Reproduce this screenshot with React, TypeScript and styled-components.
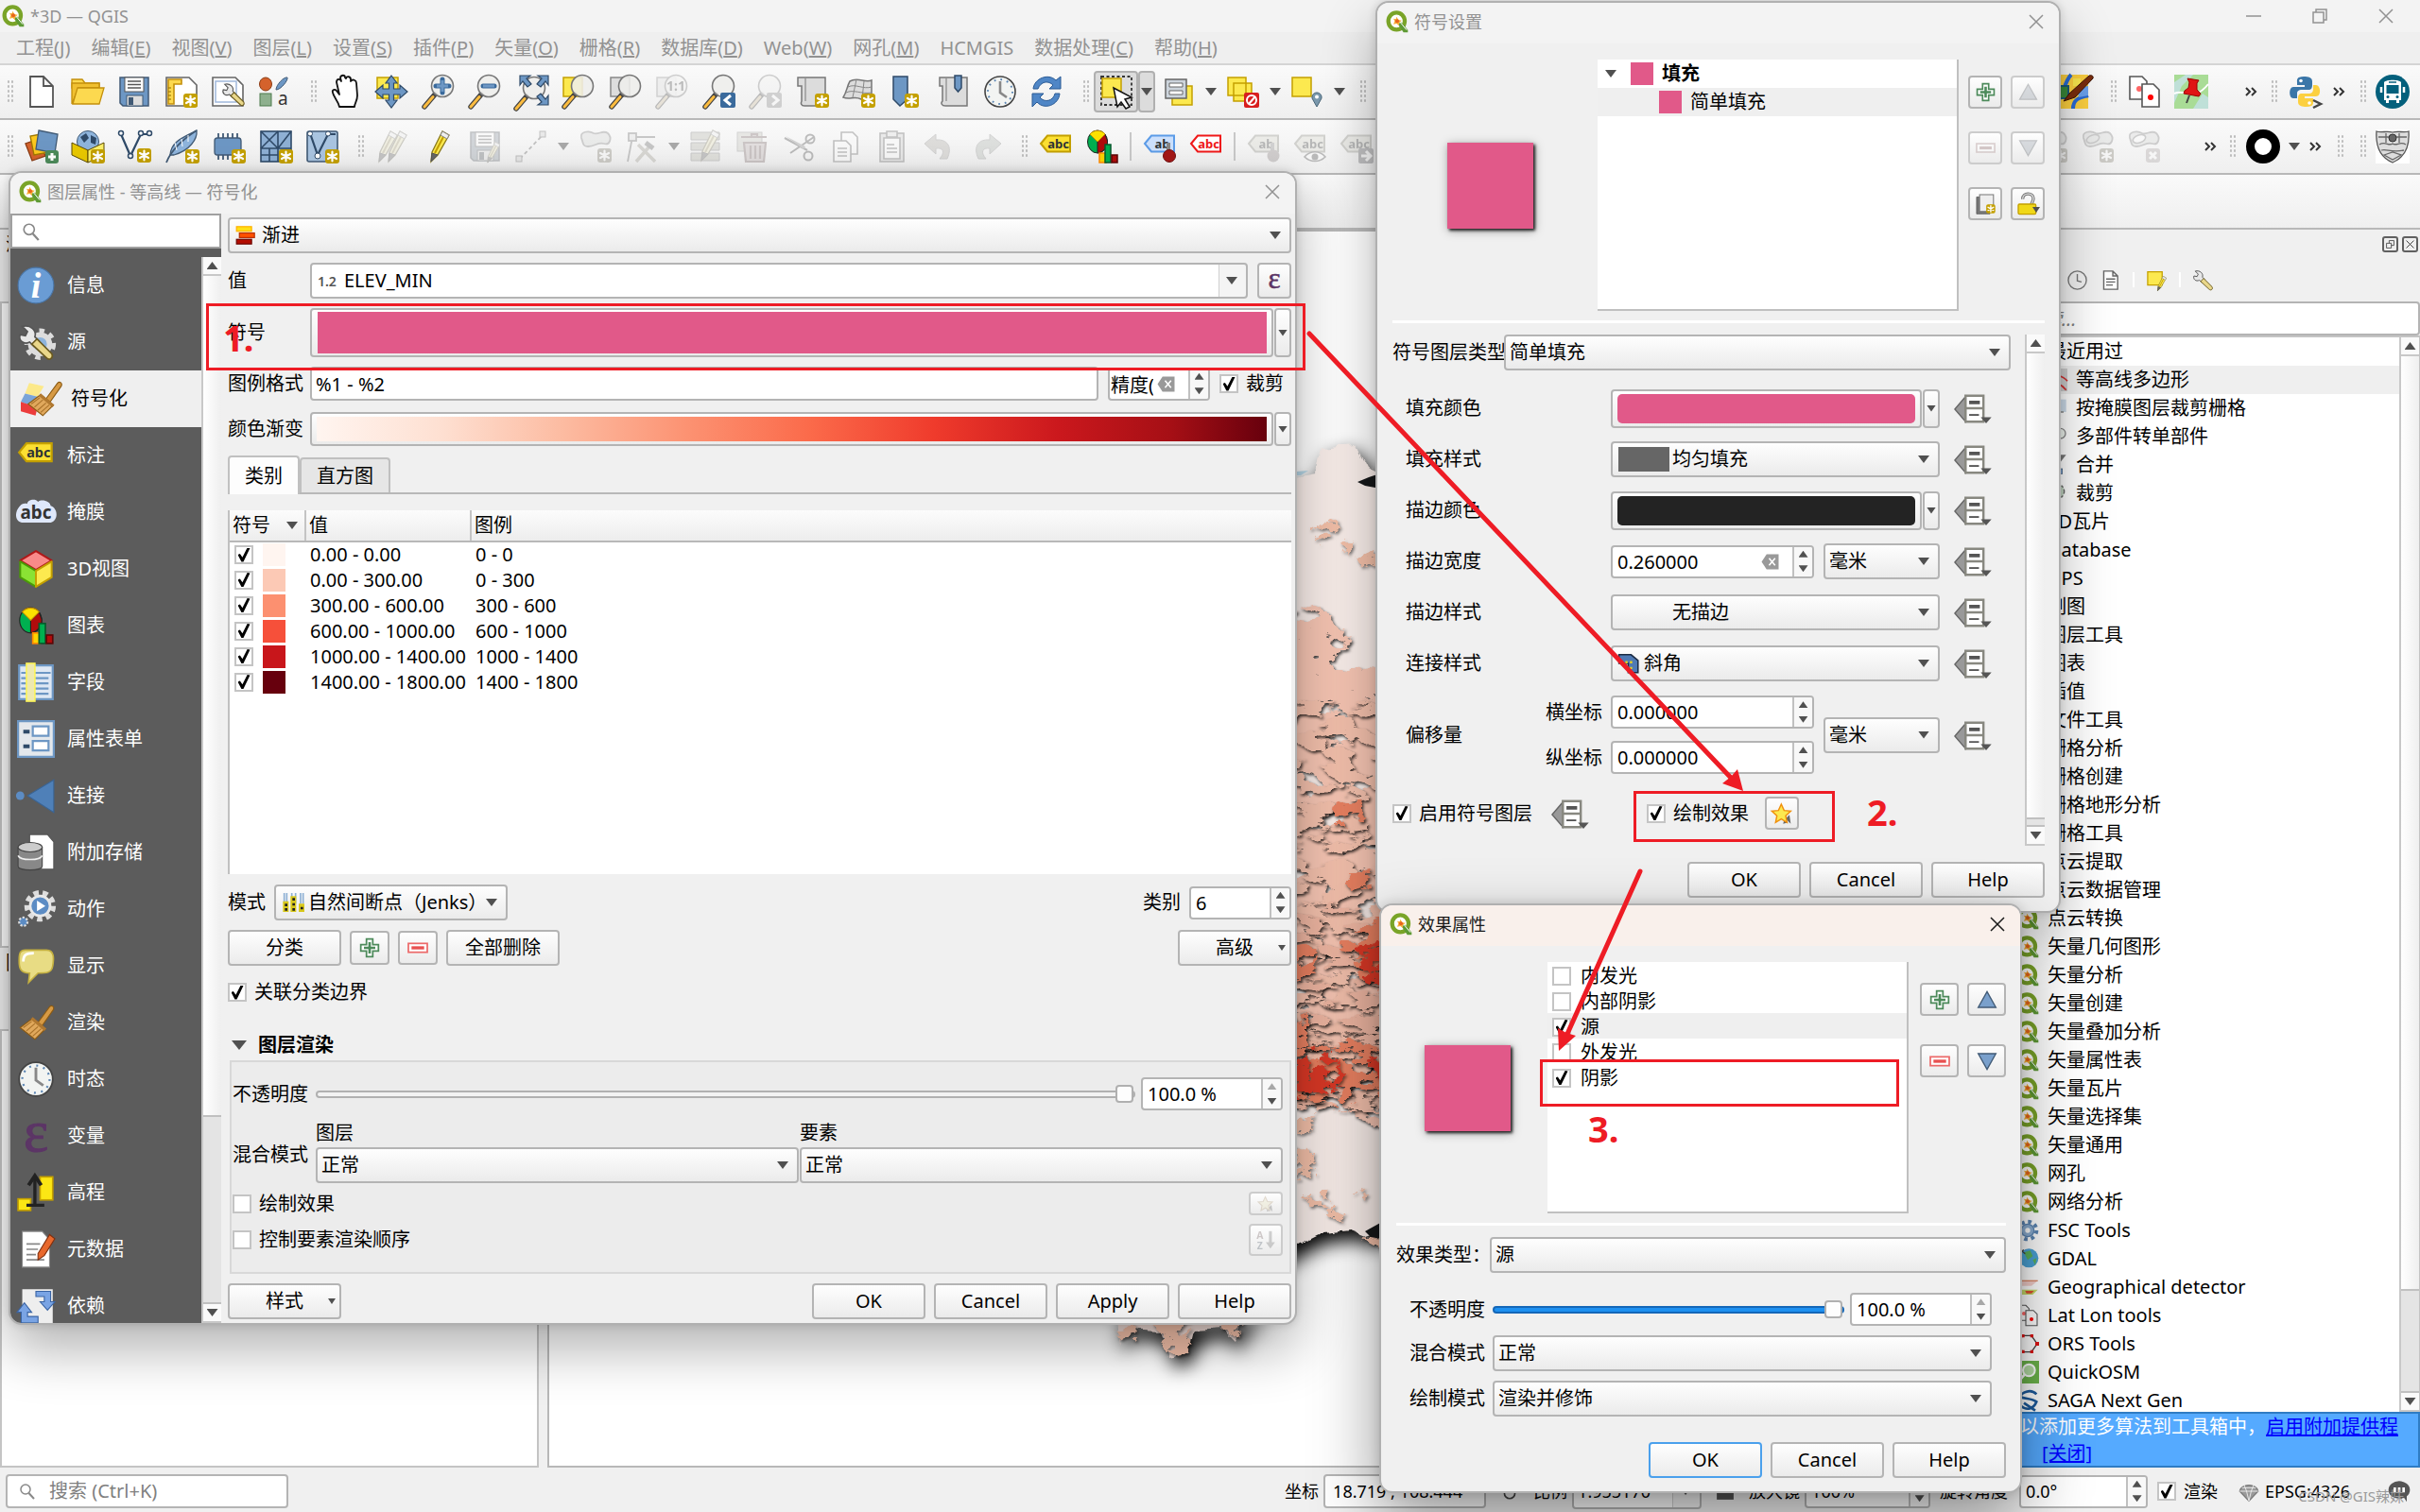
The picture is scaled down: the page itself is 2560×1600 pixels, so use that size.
import React, { ReactNode, useId } from "react";
import styled, { createGlobalStyle, css } from "styled-components";

const PINK = "#e15989";
const RED = "#ee1c25";

const Global = createGlobalStyle`
  * { box-sizing: border-box; }
  html, body { margin: 0; height: 100%; overflow: hidden; }
  body, button, input, select, textarea {
    font-family: "Noto Sans", "Noto Sans CJK SC", sans-serif;
    font-size: 20px;
    line-height: 24px;
    color: #000;
  }
  button { padding: 0; margin: 0; cursor: default; }
  input, select { margin: 0; outline: none; min-width: 0; }
`;

/* ------------------------------------------------------------------ */
/* Icons                                                               */
/* ------------------------------------------------------------------ */

const Svg = styled.svg<{ $dim?: boolean }>`
  display: block;
  flex: none;
  overflow: visible;
  ${(p) => p.$dim && css`opacity: 0.32; filter: grayscale(0.75);`}
`;

const Badge = ({ x = 20, y = 20, c = "#c4a000" }: { x?: number; y?: number; c?: string }) => (
  <g>
    <rect x={x} y={y} width="15" height="15" rx="3" fill={c} />
    <path
      d={`M${x + 7.5} ${y + 2.5}v10M${x + 3} ${y + 5}l9 5M${x + 12} ${y + 5}l-9 5`}
      stroke="#fff" strokeWidth="2.2" strokeLinecap="round"
    />
  </g>
);

const Lens = ({ children, cx = 22, cy = 12 }: { children?: ReactNode; cx?: number; cy?: number }) => (
  <g>
    <path d={`M${cx - 8} ${cy + 9}L${cx - 19} ${cy + 22}`} stroke="#444" strokeWidth="5.5" strokeLinecap="round" />
    <path d={`M${cx - 10} ${cy + 11.5}L${cx - 19} ${cy + 22}`} stroke="#fcbc3f" strokeWidth="3" strokeLinecap="round" />
    <circle cx={cx} cy={cy} r="11.5" fill="#eeeeec" fillOpacity="0.88" stroke="#777" strokeWidth="1.6" />
    {children}
  </g>
);

const Tag = ({ fill, stroke, text = "abc", color = "#2e3436" }: { fill: string; stroke: string; text?: string; color?: string }) => (
  <g>
    <path d="M2 15L9 6.500H33V23.500H9Z" fill={fill} stroke={stroke} strokeWidth="2" />
    <text x="20.500" y="19.500" textAnchor="middle" fontSize="13" fontWeight="700" fill={color}>{text}</text>
  </g>
);

const floppy = (
  <g>
    <path d="M3 3H33V33H6L3 30Z" fill="#6d97c4" stroke="#415a75" strokeWidth="1.500" />
    <rect x="8" y="3" width="20" height="15" fill="#fff" stroke="#555" />
    <path d="M11 7h14M11 10.500h14M11 14h14" stroke="#555" strokeWidth="1.500" />
    <rect x="10" y="22" width="17" height="11" fill="#ddd" stroke="#415a75" />
    <rect x="12" y="24" width="5" height="8" fill="#415a75" />
  </g>
);

const pencil = (
  <g>
    <path d="M11 24L22 2L29 6L17 27L10 34Z" fill="#fce94f" stroke="#8a7a1c" strokeWidth="1.300" />
    <path d="M14 25L25 4" stroke="#c4a000" strokeWidth="2" />
    <path d="M11 25L17 27L10 34Z" fill="#666" stroke="#555" />
    <path d="M22 2L29 6L27 10L20 6Z" fill="#eee" stroke="#888" />
  </g>
);

const blob = (
  <path d="M3 9C1 2 11 1 16 4C21 6 26 0 31 4C36 9 33 17 27 15C20 13 18 18 10 18C4 18 5 14 3 9Z" fill="#d0d6d0" stroke="#777" strokeWidth="1.800" />
);

const pie = (
  <g>
    <ellipse cx="13" cy="13" rx="10.500" ry="12" fill="#00b050" stroke="#222" />
    <path d="M13 13V25C20 24 24 18 23.500 12L21 5Z" fill="#b00c0c" stroke="#222" />
    <path d="M13 13L5 5C9 0 17 0 21 5Z" fill="#fce100" stroke="#c49000" />
    <rect x="15" y="25" width="7" height="10" fill="#fcd400" stroke="#ff8a00" strokeWidth="1.500" />
    <rect x="21" y="16" width="6" height="19" fill="#00b050" stroke="#065a2c" strokeWidth="1.500" />
    <rect x="28" y="27" width="6" height="8" fill="#b00c0c" stroke="#5c0606" strokeWidth="1.500" />
  </g>
);

const clock = (
  <g>
    <circle cx="18" cy="18" r="16" fill="#f2f4f2" stroke="#444" strokeWidth="1.600" />
    <circle cx="18" cy="18" r="13" fill="none" stroke="#5c86b4" strokeWidth="2" strokeDasharray="1.800 5" />
    <path d="M18 7V19L25 24" fill="none" stroke="#888" strokeWidth="2.600" />
  </g>
);

const wrench = (
  <g>
    <path d="M5 3L10 8L8 12L3 11C1 16 6 21 12 18L16 22L21 17L17 13C19 7 13 1 5 3Z" fill="#e8e8e8" stroke="#555" strokeWidth="1.500" />
    <path d="M14 20L19 15L33 29C35 33 31 36 28 33Z" fill="#e9d78a" stroke="#6a5a20" strokeWidth="1.500" />
  </g>
);

const brush = (
  <g>
    <path d="M20 18L31 3C33 1 36 3 34.500 6L24 21Z" fill="#d79a44" stroke="#8a5a14" />
    <path d="M15 14L27 24L17 34L3 23Z" fill="#e0a85c" stroke="#8a5a14" />
    <path d="M6 23L14 17M9 26L17 19M12 29L20 22M15 31L23 24" stroke="#a9722a" />
    <path d="M14 14L27 25" stroke="#b07830" strokeWidth="3" />
  </g>
);

const ICONS: Record<string, ReactNode> = {
  qgis: (
    <g>
      <ellipse cx="17" cy="17" rx="13" ry="13.500" fill="#fff" stroke="#7aa428" strokeWidth="6.500" />
      <path d="M18 20L25 19L35 31V35H28Z" fill="#5e9a34" />
      <path d="M19 20l4-1 10 12" fill="none" stroke="#fff" strokeWidth="1.500" />
      <path d="M17 10L20 15L25 16L21 20L21 24L17 21L12 22L14 17L12 13L16 14Z" fill="#f7b03a" />
      <circle cx="18" cy="17" r="3" fill="#e8641c" />
    </g>
  ),
  newDoc: <path d="M6 2H20L30 12V34H6ZM20 2V12H30" fill="#fff" stroke="#555" strokeWidth="1.800" />,
  open: (
    <g stroke="#c4900c" strokeWidth="1.300">
      <path d="M1 5H12L15 9H30V14H1Z" fill="#fcd94f" />
      <path d="M1 31V9H30V14H8Z" fill="#f0c030" />
      <path d="M2 31L7 14H35L30 31Z" fill="#fcd94f" />
    </g>
  ),
  save: floppy,
  newLayout: (
    <g>
      <path d="M2 3H26L34 11V33H2Z" fill="#fff" stroke="#666" strokeWidth="1.600" />
      <path d="M4 5H18V10H10V31H4Z" fill="#fcd94f" stroke="#c4900c" strokeWidth="1.600" />
      <path d="M4 14h3M4 18h3M4 22h3M4 26h3" stroke="#8a6a00" />
      <Badge />
    </g>
  ),
  layoutMgr: (
    <g>
      <path d="M2 3H26L34 11V33H2Z" fill="#fff" stroke="#666" strokeWidth="1.600" />
      <rect x="5" y="7" width="22" height="22" fill="none" stroke="#a0b8dc" strokeWidth="1.500" />
      <g transform="translate(11 8) scale(.72)">{wrench}</g>
    </g>
  ),
  style: (
    <g>
      <ellipse cx="9" cy="10" rx="6.500" ry="7" fill="#d4622c" stroke="#8a3c14" />
      <path d="M20 16C20 11 28 2 32 3C33 6 25 16 20 16Z" fill="#6d97c4" stroke="#415a75" />
      <rect x="3" y="20" width="12" height="13" fill="#8eb08e" stroke="#4c7a4c" />
      <text x="22" y="32" fontSize="19" fill="#333">a</text>
    </g>
  ),
  hand: (
    <path d="M12 34C11 28 6 24 5 19C4 16 7 15 9 17L12 21L9 8C9 4 13 4 14 7L13 3C14 0 18 0 18 3L19 4C20 1 24 2 24 5L24 7C26 4 30 6 30 9L31 22C31 28 28 30 28 34Z" fill="#fff" stroke="#111" strokeWidth="1.800" strokeLinejoin="round" />
  ),
  pan: (
    <g>
      <rect x="3" y="3" width="22" height="22" fill="#fce94f" stroke="#c4a000" strokeWidth="1.500" />
      <path d="M18 1L24 9H20.500V15H27V11L35 18L27 25V21H20.500V27H24L18 35L12 27H15.500V21H9V25L1 18L9 11V15H15.500V9H12Z" fill="#6d97c4" stroke="#2f4a68" strokeWidth="1.200" />
    </g>
  ),
  zoomIn: <Lens><path d="M22 5V19M15 12H29" stroke="#3a6a9c" strokeWidth="5" strokeLinecap="round" /><path d="M22 6V18M16 12H28" stroke="#6d97c4" strokeWidth="3" /></Lens>,
  zoomOut: <Lens><path d="M16 12H28" stroke="#3a6a9c" strokeWidth="5" strokeLinecap="round" /><path d="M16 12H28" stroke="#6d97c4" strokeWidth="3" /></Lens>,
  zoomFull: (
    <g>
      <Lens cx={20} cy={14} />
      <path d="M5 1H16L12 4L17 10L13 13L8 7L5 11Z M35 1H24L28 4L23 10L27 13L32 7L35 11Z M35 32H24L28 29L23 23L27 20L32 26L35 22Z" fill="#6d97c4" stroke="#2f4a68" strokeWidth="1.200" />
    </g>
  ),
  zoomSel: <g><rect x="2" y="3" width="20" height="20" fill="#fce94f" stroke="#c4a000" strokeWidth="1.500" /><Lens /></g>,
  zoomLayer: <g><rect x="2" y="3" width="20" height="20" fill="#ddd" stroke="#888" strokeWidth="1.500" /><Lens /></g>,
  zoomNative: <g><rect x="2" y="3" width="20" height="20" fill="#ddd" stroke="#888" strokeWidth="1.500" /><Lens><text x="22" y="17" textAnchor="middle" fontSize="14" fontWeight="700" fill="#444">1:1</text></Lens></g>,
  zoomLast: <g><Lens /><rect x="19" y="19" width="16" height="16" rx="2" fill="#3a6a9c" /><path d="M30 22L24 27L30 32" fill="none" stroke="#fff" strokeWidth="3" /></g>,
  zoomNext: <g><Lens /><rect x="19" y="19" width="16" height="16" rx="2" fill="#888" /><path d="M25 22L31 27L25 32" fill="none" stroke="#fff" strokeWidth="3" /></g>,
  mapView: (
    <g>
      <path d="M2 3H31V33H9C5 33 5 30 6 28V12H2Z" fill="#dcdcdc" stroke="#777" strokeWidth="1.500" />
      <path d="M10 4V28" stroke="#aaa" strokeWidth="2" />
      <Badge />
    </g>
  ),
  view3d: (
    <g>
      <path d="M8 7C16 2 24 9 31 6V26H20C13 22 8 27 1 24C5 18 5 12 8 7Z" fill="#dcdcdc" stroke="#777" strokeWidth="1.500" />
      <path d="M6 13C14 9 22 16 31 13M4 19C12 15 20 21 31 19M15 5L11 24M23 7L21 25" fill="none" stroke="#888" />
      <Badge />
    </g>
  ),
  bookmarkNew: <g><path d="M4 2H19V26L11 33L4 26Z" fill="#6d97c4" stroke="#2f4a68" strokeWidth="1.500" /><Badge x={16} /></g>,
  bookmarks: (
    <g>
      <path d="M4 3H33V33H10C6 33 5 30 7 28V12H4Z" fill="#dcdcdc" stroke="#777" strokeWidth="1.500" />
      <path d="M11 4V28" stroke="#aaa" strokeWidth="2" />
      <path d="M20 1H27V14L23.500 18L20 14Z" fill="#6d97c4" stroke="#2f4a68" strokeWidth="1.500" />
    </g>
  ),
  clock,
  refresh: (
    <g fill="#4f86c6" stroke="#2a5a94">
      <path d="M4 15C5 4 20 -2 28 6L33 2V15H21L25 11C20 6 12 7 9 15Z" />
      <path d="M32 20C31 32 16 38 8 29L3 34V20H15L11 24C16 30 25 28 27 20Z" />
    </g>
  ),
  select: (
    <g>
      <rect x="2" y="2" width="32" height="30" fill="none" stroke="#333" strokeWidth="1.800" strokeDasharray="3 2.500" />
      <rect x="3" y="4" width="20" height="20" fill="#fce94f" stroke="#c4a000" strokeWidth="1.500" />
      <path d="M15 14L34 24L27 26L32 34L28 36L23 29L19 34Z" fill="#fff" stroke="#111" strokeWidth="1.500" />
    </g>
  ),
  selectForm: (
    <g>
      <rect x="11" y="12" width="21" height="20" fill="#fce94f" stroke="#c4a000" strokeWidth="1.500" />
      <rect x="4" y="5" width="22" height="20" fill="#ccd4dc" stroke="#666" strokeWidth="1.500" />
      <path d="M8 9h14v4H8zM8 17h14v4H8z" fill="#fff" stroke="#666" />
    </g>
  ),
  deselect: (
    <g>
      <path d="M2 3H21V22H2Z M8 9H27V28H8Z" fill="#fce94f" stroke="#c4a000" strokeWidth="1.500" />
      <rect x="19" y="19" width="16" height="16" rx="2" fill="#d81e1e" />
      <circle cx="27" cy="27" r="5" fill="none" stroke="#fff" strokeWidth="2" /><path d="M24 31L31 23" stroke="#fff" strokeWidth="2" />
    </g>
  ),
  selectLoc: (
    <g>
      <rect x="2" y="3" width="20" height="20" fill="#fce94f" stroke="#c4a000" strokeWidth="1.500" />
      <path d="M28 34L23 25C22 17 34 17 33 25Z" fill="#7a98ac" stroke="#4a6678" /><circle cx="28" cy="23.500" r="2" fill="#fff" />
    </g>
  ),
  josm: (
    <g>
      <rect x="0" y="0" width="34" height="36" fill="#fccf3f" />
      <path d="M0 30C8 24 8 8 16 0M18 36C18 24 28 24 34 22" stroke="#2a6ad4" strokeWidth="4" fill="none" />
      <path d="M22 14L34 12V22L24 24Z" fill="#6aa0ec" />
      <rect x="4" y="12" width="9" height="13" fill="#3a8a3a" stroke="#1a5a7a" strokeWidth="2" /><rect x="18" y="4" width="8" height="8" fill="#fce94f" />
      <path d="M14 20L35 1C37 0 40 1 39 4L20 24L8 28Z" fill="#7a2c0c" stroke="#3c1404" />
    </g>
  ),
  latlon: (
    <g stroke="#555" strokeWidth="1.600">
      <path d="M2 2H15L20 7V26H2Z" fill="#fff" /><circle cx="12" cy="15" r="3" fill="#f66" stroke="none" />
      <path d="M15 10H27L33 16V34H15Z" fill="#fff" /><circle cx="24" cy="24" r="3" fill="#f00" stroke="none" />
    </g>
  ),
  pinMap: (
    <g>
      <rect width="36" height="36" fill="#a9dc96" /><path d="M0 8L12 0H20L8 12L0 30ZM20 36L30 20L36 24V36Z" fill="#bfe0d8" /><path d="M0 20C12 14 20 30 36 10" stroke="#fff" strokeWidth="2" fill="none" />
      <path d="M14 4L26 6L24 9L24 16L28 20L26 23L10 20L11 17L15 14L16 8Z" fill="#e01414" stroke="#900" /><path d="M16 22L13 30" stroke="#444" strokeWidth="2" />
    </g>
  ),
  python: (
    <g>
      <path d="M17 2C9 2 10 6 10 8V11H18V13H6C1 13 1 25 6 25H10V20C10 17 12 16 15 16H22C25 16 26 14 26 11V7C26 3 22 2 17 2Z" fill="#3a76a8" />
      <path d="M20 34C28 34 27 30 27 28V25H18V23H30C36 23 35 11 30 11H27V15C27 19 25 20 22 20H15C12 20 11 22 11 25V29C11 33 15 34 20 34Z" fill="#fcd040" />
      <circle cx="14" cy="6.500" r="1.800" fill="#fff" /><circle cx="23" cy="30" r="1.800" fill="#fff" />
      <path d="M27 27L35 31L27 35" fill="none" stroke="#444" strokeWidth="2.500" />
    </g>
  ),
  bus: (
    <g>
      <circle cx="18" cy="18" r="18" fill="#04607c" />
      <path d="M9 8C11 5 25 5 27 8V27H25V30H22V27H14V30H11V27H9Z" fill="#fff" />
      <path d="M11.500 11H24.500V20H11.500Z" fill="#04607c" /><path d="M14 8h8" stroke="#04607c" strokeWidth="1.500" />
      <circle cx="13" cy="23.500" r="1.500" fill="#04607c" /><circle cx="23" cy="23.500" r="1.500" fill="#04607c" /><path d="M6 13v6M30 13v6" stroke="#fff" strokeWidth="2.500" />
    </g>
  ),
  addLayer: (
    <g strokeWidth="1.300">
      <path d="M1 15L8 33L22 28L15 10Z" fill="#d4622c" stroke="#8a3c14" />
      <path d="M6 7L10 27L26 24L22 4Z" fill="#fcc81e" stroke="#a07800" />
      <path d="M15 1L35 5L32 25L12 21Z" fill="#6d97c4" stroke="#415a75" />
      <rect x="22" y="22" width="14" height="14" rx="3" fill="#4c8a5a" /><path d="M29 25V33M25 29H33" stroke="#fff" strokeWidth="3" />
    </g>
  ),
  dataSrc: (
    <g>
      <circle cx="18" cy="13" r="11.500" fill="#8eb4dc" stroke="#415a75" /><path d="M10 8L16 4L19 9L14 14ZM21 6L27 9L26 16L21 14Z" fill="#2f4a68" />
      <path d="M1 14L18 22V35L1 27Z" fill="#e8c800" stroke="#5c4a00" /><path d="M35 14L18 22V35L35 27Z" fill="#fcf06a" stroke="#5c4a00" />
      <Badge x={21} y={21} />
    </g>
  ),
  newShp: (
    <g stroke="#2f4a68" strokeWidth="2.200">
      <path d="M3 5L13 28L24 5H33" fill="none" /><circle cx="3" cy="4" r="2.500" fill="#fff" strokeWidth="1.500" /><circle cx="24" cy="4" r="2.500" fill="#fff" strokeWidth="1.500" /><circle cx="33" cy="4" r="2.500" fill="#fff" strokeWidth="1.500" /><circle cx="13" cy="28" r="2.500" fill="#fff" strokeWidth="1.500" />
      <g stroke="none"><Badge /></g>
    </g>
  ),
  feather: (
    <g>
      <path d="M5 27C6 12 20 8 33 1C34 10 26 22 9 27Z" fill="#8eb4dc" stroke="#415a75" strokeWidth="1.300" /><path d="M1 35C6 22 16 12 33 1" fill="none" stroke="#415a75" strokeWidth="1.800" /><path d="M12 22L10 14M18 18L17 10M24 13L24 6" stroke="#fff" />
      <Badge x={21} y={21} />
    </g>
  ),
  chip: (
    <g>
      <path d="M7 4v6M12 4v6M17 4v6M22 4v6M27 4v6M7 26v6M12 26v6M17 26v6" stroke="#415a75" strokeWidth="1.800" />
      <rect x="3" y="9" width="28" height="18" rx="3" fill="#6d97c4" stroke="#415a75" strokeWidth="1.300" /><Badge x={21} y={21} />
    </g>
  ),
  meshNew: (
    <g>
      <rect x="2" y="2" width="32" height="32" fill="#8eb0d4" stroke="#2f4a68" strokeWidth="1.600" /><path d="M2 20H34M20 2V34M2 2L20 20M20 2L2 20M34 2L20 20M2 27H20M11 20V34" stroke="#2f4a68" strokeWidth="1.600" /><Badge x={21} y={21} />
    </g>
  ),
  gpkg: (
    <g>
      <rect x="2" y="2" width="32" height="32" rx="2" fill="#a9c4e0" stroke="#415a75" strokeWidth="1.600" /><path d="M5 4L13 27L24 5H32" fill="none" stroke="#2f4a68" strokeWidth="2.200" /><circle cx="5" cy="4.500" r="2.500" fill="#fff" stroke="#2f4a68" /><circle cx="24" cy="4.500" r="2.500" fill="#fff" stroke="#2f4a68" /><circle cx="13" cy="28" r="3" fill="#fff" stroke="#2f4a68" /><Badge x={21} y={21} />
    </g>
  ),
  pencils: <g><g transform="translate(-6 0)">{pencil}</g><g transform="translate(4 0)">{pencil}</g></g>,
  pencil,
  saveEdit: <g>{floppy}<g transform="translate(14 12) scale(.68)">{pencil}</g></g>,
  digitize: <g stroke="#555"><path d="M6 31L30 6" strokeWidth="1.800" strokeDasharray="4 3" /><rect x="2" y="28" width="6" height="6" fill="#ccc" /><rect x="27" y="2" width="6" height="6" fill="#ccc" /></g>,
  blobNew: <g>{blob}<Badge c="#8a7a40" /></g>,
  blobRing: <g>{blob}<ellipse cx="13" cy="10" rx="7" ry="4" fill="none" stroke="#777" strokeWidth="1.600" transform="rotate(-20 13 10)" /><Badge c="#8a7a40" /></g>,
  blobDel: <g>{blob}<ellipse cx="13" cy="10" rx="7" ry="4" fill="#fff" stroke="#777" strokeWidth="1.600" transform="rotate(-20 13 10)" /><rect x="20" y="20" width="15" height="15" rx="3" fill="#b89a9a" /><path d="M24 24l7 7M31 24l-7 7" stroke="#fff" strokeWidth="3" /></g>,
  vertex: <g stroke="#666" strokeWidth="1.800" fill="none"><path d="M8 8H32M8 8L3 34" /><rect x="4" y="4" width="8" height="8" fill="#ddd" /><path d="M12 34L26 18M14 16L32 34" strokeWidth="3.500" stroke="#a89a70" /><path d="M22 14L30 20" strokeWidth="5" /></g>,
  tableEdit: <g><path d="M2 3H32V11H2ZM2 14H32V22H2ZM2 25H32V33H2Z" fill="#b8b88a" stroke="#777" /><g transform="translate(3 -1)">{pencil}</g></g>,
  trash: <g><rect x="2" y="3" width="26" height="20" fill="#c8c8a8" stroke="#888" /><path d="M6 8H33M9 14H32L30 34H11ZM16 17V31M21 17V31M26 17V31M17 8V5H23V8" fill="#d8a8a8" stroke="#a05a5a" strokeWidth="2.200" /></g>,
  scissors: <g fill="none" stroke="#444" strokeWidth="2"><path d="M2 9L26 22M8 25L33 8" /><path d="M3 7L24 18L22 21Z" fill="#888" stroke="none" /><circle cx="29" cy="10" r="4.500" /><circle cx="27" cy="28" r="4.500" /></g>,
  copy: <g stroke="#555" strokeWidth="1.600" fill="#fff"><path d="M13 3H25L30 8V26H13Z" /><path d="M5 12H18L23 17V34H5Z" /><path d="M9 20h10M9 24h10M9 28h10" /></g>,
  paste: <g stroke="#555" strokeWidth="1.600" fill="#fff"><rect x="5" y="4" width="25" height="30" fill="#ccc" /><path d="M9 9H26V31H9Z" /><path d="M12 2h11v6H12z" fill="#ddd" /><path d="M12 16h8M12 20h11M12 24h11" /></g>,
  undo: <path d="M2 15L14 5V11C26 10 32 18 26 31H18C24 24 22 19 14 20V26Z" fill="#b8a890" stroke="#888" />,
  redo: <path d="M34 15L22 5V11C10 10 4 18 10 31H18C12 24 14 19 22 20V26Z" fill="#a0b8a0" stroke="#888" />,
  tagYellow: <Tag fill="#fce032" stroke="#c4a000" />,
  tagBlue: <g><Tag fill="#cce0fc" stroke="#5c9ce8" text="ab" /><path d="M27 14V24" stroke="#888" strokeWidth="4" /><circle cx="28" cy="28" r="6.500" fill="#a41818" stroke="#701010" /></g>,
  tagRed: <Tag fill="#fff" stroke="#f01818" color="#f01818" />,
  tagPin: <g><Tag fill="#d8d8a8" stroke="#888860" text="ab" /><path d="M27 14V24" stroke="#888" strokeWidth="4" /><circle cx="28" cy="28" r="6.500" fill="#a07878" /></g>,
  tagEye: <g><Tag fill="#d8d8a8" stroke="#888860" /><path d="M12 29C18 22 28 22 34 29C28 35 18 35 12 29Z" fill="#fff" stroke="#444" strokeWidth="1.600" /><circle cx="23" cy="29" r="3.500" fill="#444" /></g>,
  tagMove: <g><Tag fill="#d8d8a8" stroke="#888860" /><rect x="20" y="20" width="16" height="16" rx="2" fill="#556" /><path d="M23 28H32M28 23L33 28L28 33" fill="none" stroke="#fff" strokeWidth="3" /></g>,
  pie,
  ring: <circle cx="18" cy="18" r="13.500" fill="#fff" stroke="#000" strokeWidth="9" />,
  crest: (
    <g>
      <rect width="36" height="36" fill="#fff" />
      <path d="M1 2C6 4 12 1 18 3C24 1 30 4 35 2C36 16 32 29 18 35C4 29 0 16 1 2Z" fill="#ddd" stroke="#555" strokeWidth="1.300" />
      <path d="M3 8H33M4 16C10 12 14 18 18 15C22 18 26 12 32 16M6 22C12 20 16 25 30 22M11 4V14M25 4V14M9 27L18 24L27 27L18 32Z" fill="none" stroke="#666" strokeWidth="1.300" /><circle cx="18" cy="9" r="4" fill="#666" stroke="#333" />
    </g>
  ),
  sClock: <g fill="none" stroke="#777" strokeWidth="2.200"><circle cx="18" cy="18" r="15" /><path d="M18 8V19L25 21" /></g>,
  sDoc: <path d="M7 3H22L30 11V33H7ZM22 3V11H30M11 16H26M11 21H26M11 26H22" fill="#fff" stroke="#666" strokeWidth="2.200" />,
  note: <g><path d="M3 4H27V26H3Z" fill="#fce94f" stroke="#c4a000" strokeWidth="2" /><g transform="translate(12 10) scale(.75)">{pencil}</g></g>,
  wrench,
  plus: <g><path d="M13 4H23V13H32V23H23V32H13V23H4V13H13Z" fill="#fff" stroke="#4c8a5a" strokeWidth="2.600" /><path d="M18 9V27M9 18H27" stroke="#4c8a5a" strokeWidth="4" /></g>,
  minus: <g><rect x="3" y="11" width="30" height="14" fill="#fff" stroke="#ec6a6a" strokeWidth="2.600" /><rect x="8" y="15.500" width="20" height="5" fill="#e85050" /></g>,
  up: <path d="M18 5L32 30H4Z" fill="#7aa0cc" stroke="#415a75" strokeWidth="2" />,
  down: <path d="M18 31L32 6H4Z" fill="#7aa0cc" stroke="#415a75" strokeWidth="2" />,
  dup: <g><path d="M3 7H25V35H3Z" fill="#777" stroke="#444" /><path d="M8 3H31V31H8Z" fill="#eee" stroke="#777" strokeWidth="1.600" /><Badge x={19} y={19} /></g>,
  lock: <g><path d="M10 10C10 -1 27 -1 27 9C27 14 24 15 24 19" fill="none" stroke="#777" strokeWidth="5" /><path d="M10 10C10 -1 27 -1 27 9C27 14 24 15 24 19" fill="none" stroke="#ddd" strokeWidth="2" /><rect x="3" y="18" width="28" height="16" rx="2" fill="#f0d818" stroke="#c4a000" strokeWidth="2" /></g>,
  star: <g><path d="M24 26L30 20L32 34L26 28ZM20 34L22 26L28 32Z" fill="#666" /><path d="M17 3L21.500 13L32 14L24 21.500L26 32L17 26.500L8 32L10 21.500L2 14L12.500 13Z" fill="#fce94f" stroke="#f0900c" strokeWidth="2.200" /></g>,
  sortAz: <g><text x="2" y="16" fontSize="17" fontWeight="700" fill="#a05a5a">A</text><text x="3" y="34" fontSize="17" fontWeight="700" fill="#3a6a9c">Z</text><path d="M26 3V24" stroke="#777" strokeWidth="5" /><path d="M18 22H34L26 33Z" fill="#777" /></g>,
  grad: <g strokeWidth="2"><rect x="2" y="3" width="26" height="8" fill="#ffe014" stroke="#ffb000" /><rect x="7" y="14" width="26" height="8" fill="#ff5000" stroke="#b83000" /><rect x="2" y="25" width="26" height="8" fill="#b40c00" stroke="#6c0600" /></g>,
  jenks: <g><path d="M4 3V20M8 3V20M16 3V20M22 3V20M30 3V20M34 3V20" stroke="#8eb0d4" strokeWidth="2.500" /><path d="M2 16H11V33H2ZM14 8H23V33H14ZM27 20H36V33H27Z" fill="#d8c81c" /><path d="M5 20h4v4H5zM5 27h4v4H5zM17 11h4v4h-4zM17 19h4v4h-4zM17 27h4v4h-4zM30 25h4v4h-4z" fill="#222" /></g>,
  bevel: <g><path d="M1 3H22L34 13V34H17V18H1Z" fill="#4f7ab4" stroke="#1c2c44" strokeWidth="2.500" /><path d="M12 14h4v4h-4zM20 14h4v4h-4zM20 24h4v4h-4z" fill="#e8d020" /></g>,
  dd: (
    <g>
      <path d="M1 19L13 5V33Z" fill="#999" stroke="#666" strokeWidth="1.500" />
      <path d="M13 4H33V33H13ZM13 18H33" fill="#fff" stroke="#888880" strokeWidth="2.600" />
      <path d="M17 11.500H29" stroke="#555" strokeWidth="4" /><path d="M17 25.500H28" stroke="#555" strokeWidth="2" />
      <path d="M30 28H42L36 35Z" fill="#555" />
    </g>
  ),
  magnify: <g fill="none" stroke="#888" strokeWidth="3"><circle cx="14" cy="14" r="10" /><path d="M21 22L32 34" strokeWidth="4" /></g>,
  clearX: <g><path d="M1 18L11 3H35V33H11Z" fill="#999" /><path d="M16 11L28 25M28 11L16 25" stroke="#fff" strokeWidth="3" /></g>,
  gear: <g><circle cx="18" cy="18" r="10" fill="#8eb0d4" stroke="#5c86b4" strokeWidth="2" /><circle cx="18" cy="18" r="14" fill="none" stroke="#5c86b4" strokeWidth="6" strokeDasharray="5.500 5.500" /><circle cx="18" cy="18" r="4" fill="#fff" /></g>,
  gdal: <g><circle cx="20" cy="17" r="15" fill="#4ca4d8" /><path d="M12 8L22 5L26 14L18 20ZM26 20L32 17L30 28Z" fill="#5cb45c" /><path d="M4 2L14 10M2 10L12 4" stroke="#444" strokeWidth="2" /><text x="2" y="34" fontSize="15" fontWeight="700">DAL</text></g>,
  geodet: <g><path d="M2 8H34L24 16H2Z" fill="#f4d0cc" /><path d="M2 8H34" stroke="#d86" strokeWidth="2" /><path d="M2 22H34L26 30H6Z" fill="#c8dc6a" /><path d="M14 24H28L24 28H16Z" fill="#e05030" /></g>,
  ors: <g fill="none" stroke="#444" strokeWidth="2"><path d="M10 5H24L33 18L24 31H10L2 18Z" /><path d="M8 3h5v5H8zM22 3h5v5h-5zM8 28h5v5H8zM22 28h5v5h-5zM30 15h6v6h-6z" fill="#e01414" stroke="none" /></g>,
  osm: <g><rect width="36" height="36" fill="#6cb44c" /><circle cx="20" cy="15" r="9.500" fill="#b4dca4" stroke="#fff" strokeWidth="3" /><path d="M13 22L4 32" stroke="#fff" strokeWidth="4" /></g>,
  saga: <g fill="none" stroke="#1c5a9c" strokeWidth="4"><path d="M32 8C22 -2 8 6 6 12C14 16 24 14 32 20C28 30 18 36 6 26" /><path d="M12 22L30 34" /></g>,
  contour: <g><rect width="36" height="36" fill="#ccc" /><path d="M0 20C16 20 28 26 34 34M0 10C16 8 30 12 36 20" stroke="#d03030" strokeWidth="2.500" fill="none" /></g>,
  maskClip: <g><rect x="14" y="4" width="20" height="20" fill="#cddcea" /><path d="M2 24H30M24 4V32" stroke="#888" strokeWidth="2" /></g>,
  multi: <g fill="#eef4ee" stroke="#888" strokeWidth="2"><ellipse cx="12" cy="24" rx="9" ry="8" /><ellipse cx="25" cy="13" rx="8" ry="8" /></g>,
  merge: <g><path d="M2 2H34L20 20H16Z" fill="#777" /><rect x="14" y="24" width="14" height="8" fill="#7aa0cc" stroke="#415a75" /></g>,
  clip: <ellipse cx="16" cy="15" rx="15" ry="13" fill="#c0d4c0" stroke="#666" strokeWidth="2" strokeDasharray="4 3" />,
  mouse: <g fill="none" stroke="#444" strokeWidth="3"><circle cx="18" cy="22" r="10" /><path d="M18 2V12M10 14L4 8M26 14L32 8" /></g>,
  padlock: <g><path d="M8 16V10C8 0 28 0 28 10V16" fill="none" stroke="#555" strokeWidth="4" /><rect x="2" y="16" width="32" height="18" fill="#555" /></g>,
  globe: <g stroke="#777" strokeWidth="2"><path d="M2 18C4 4 32 4 34 18L18 35Z" fill="#999" /><path d="M2 18H34M10 8L14 18L18 35L22 18L26 8M6 12H30" fill="none" stroke="#eee" strokeWidth="1.500" /></g>,
  chat: <g><ellipse cx="18" cy="16" rx="17" ry="14" fill="#555" /><path d="M24 26L30 35L30 24Z" fill="#555" /><path d="M9 12h4v8H9zM16 12h4v8h-4zM23 12h4v8h-4z" fill="#fff" /></g>,
  epsilon: <text x="18" y="32" textAnchor="middle" fontSize="56" fill="#5c3566" stroke="#5c3566" fontFamily="Liberation Serif, serif">ε</text>,
  // sidebar pictures
  info: <g><circle cx="18" cy="18" r="17" fill="#6a9cd4" stroke="#4a76a8" /><text x="18" y="30" textAnchor="middle" fontSize="34" fontStyle="italic" fontWeight="700" fill="#fff" fontFamily="Liberation Serif, serif">i</text></g>,
  source: <g><circle cx="22" cy="20" r="9" fill="#8eb4dc" stroke="#ddd" strokeWidth="5" /><circle cx="22" cy="20" r="13" fill="none" stroke="#ddd" strokeWidth="4" strokeDasharray="5 5" />{wrench}</g>,
  symbology: <g><path d="M8 3L22 6L16 16L4 13Z" fill="#fce98a" /><path d="M4 13L16 16L11 25L0 21Z" fill="#7aa4d8" /><path d="M0 21L16 26L14 34L0 30Z" fill="#ec3c3c" /><g transform="translate(4 0)">{brush}</g></g>,
  mask: <g><path d="M3 12C-3 18 -2 28 6 28H32C40 26 39 14 32 12C32 8 24 5 20 8C17 4 9 7 10 10C7 9 4 10 3 12Z" fill="#dfe8fb" /><text x="18" y="24" textAnchor="middle" fontSize="17" fontWeight="700" fill="#333">abc</text></g>,
  cube: <g strokeWidth="1.800" strokeLinejoin="round"><path d="M18 1L33 10L18 19L3 10Z" fill="#f88a8a" stroke="#b01818" /><path d="M3 11L18 20V35L3 26Z" fill="#8ae234" stroke="#4a9a06" /><path d="M33 11L18 20V35L33 26Z" fill="#fce94f" stroke="#c4a000" /></g>,
  fields: <g><path d="M2 2H34V34H2Z" fill="#dfe8f4" stroke="#6d97c4" strokeWidth="2" /><path d="M4 9H32M4 14H30M4 19H30M4 24H30M4 29H30" stroke="#6d97c4" strokeWidth="2" /><rect x="9" y="0" width="8" height="36" fill="#ede8b0" stroke="#fcf45a" strokeWidth="1.500" /></g>,
  form: <g><path d="M1 1H35V35H1Z" fill="#e4e8ec" stroke="#6d97c4" strokeWidth="2" /><path d="M6 11h6M6 25h6" stroke="#2f4a68" strokeWidth="3.500" /><path d="M15 6H30V15H15ZM15 20H30V29H15Z" fill="#fff" stroke="#6d97c4" strokeWidth="2" /></g>,
  join: <g><circle cx="3" cy="18" r="4" fill="#5c8cc4" /><path d="M10 18L35 3V34Z" fill="#4f80b8" stroke="#3a6494" /></g>,
  storage: <g><path d="M12 1H29L35 8V34H12Z" fill="#fff" stroke="#555" /><path d="M1 13V31C1 36 24 36 24 31V13" fill="#888" stroke="#444" /><ellipse cx="12.500" cy="13" rx="11.500" ry="4.500" fill="#ccc" stroke="#444" /><path d="M1 21C3 26 22 26 24 21" fill="none" stroke="#eee" strokeWidth="1.500" /></g>,
  action: <g><circle cx="22" cy="15" r="12.500" fill="none" stroke="#ddd" strokeWidth="5" strokeDasharray="5 3.700" /><circle cx="22" cy="15" r="9.500" fill="#5c8cc4" stroke="#e8e8e8" strokeWidth="2.500" /><path d="M19 10L27 15L19 20Z" fill="#fff" /><circle cx="6" cy="30" r="4" fill="#5c8cc4" stroke="#ddd" strokeWidth="2" strokeDasharray="2 1.500" /></g>,
  bubble: <g><path d="M8 3H28C36 3 35 12 34 18C33 25 28 25 20 25L11 34L12 25C3 25 2 20 2 13C2 6 3 3 8 3Z" fill="#e8dc84" stroke="#c4b040" strokeWidth="1.500" /><path d="M6 14C6 8 8 6 16 6" fill="none" stroke="#fff" strokeWidth="2.500" /></g>,
  brush,
  elev: <g><rect x="22" y="3" width="12" height="22" fill="#fce614" stroke="#c4a000" strokeWidth="1.500" /><rect x="1" y="24" width="12" height="11" fill="#fce614" stroke="#c4a000" strokeWidth="1.500" /><path d="M17 3V29M9 30H26" stroke="#222" strokeWidth="3" /><path d="M11 11L17 2L23 11" fill="none" stroke="#222" strokeWidth="3.500" /></g>,
  meta: <g><path d="M5 1H24L31 9V35H5Z" fill="#fff" stroke="#888" /><path d="M9 13H22M9 18H20M9 23H18M9 28H26" stroke="#888" strokeWidth="1.500" /><path d="M20 22L31 4L36 8L26 24L20 28Z" fill="#e8682c" stroke="#803010" /></g>,
  deps: <g><path d="M5 2H34V35H5Z" fill="#eee" /><path d="M18 4H32V14H36L29 22L22 14H26V9H18Z" fill="#7aa4e4" stroke="#3a64a4" /><path d="M20 34H4V24H0L7 15L14 24H10V28H20Z" fill="#7aa4e4" stroke="#3a64a4" /></g>,
};

const Icon = ({ n, s = 36, dim }: { n: string; s?: number; dim?: boolean }) => (
  <Svg width={s} height={s} viewBox="0 0 36 36" fill="none" $dim={dim} aria-hidden="true">{ICONS[n]}</Svg>
);

const Arrow = styled.span<{ $up?: boolean; $pale?: boolean; $s?: number }>`
  flex: none;
  width: ${(p) => (p.$s ?? 6) * 2}px;
  height: ${(p) => (p.$s ?? 6) + 2}px;
  background: ${(p) => (p.$pale ? "#a8a8a8" : "#505050")};
  clip-path: ${(p) => (p.$up ? "polygon(50% 0, 100% 100%, 0 100%)" : "polygon(0 0, 100% 0, 50% 100%)")};
`;

/* ------------------------------------------------------------------ */
/* Controls                                                            */
/* ------------------------------------------------------------------ */

const raised = css`
  background: linear-gradient(#fefefe, #ebebeb);
  border: 2px solid #b4b4b4;
  border-radius: 4px;
`;

const Push = styled.button<{ $w?: number; $tone?: string; $h?: number }>`
  ${raised}
  display: flex;
  align-items: center;
  justify-content: center;
  position: relative;
  flex: none;
  width: ${(p) => p.$w ?? 120}px;
  height: ${(p) => p.$h ?? 38}px;
  ${(p) => p.$tone && css`border-color: ${p.$tone};`}
  &:disabled { border-color: #cccccc; }
`;

const MenuMark = styled(Arrow)`
  position: absolute;
  right: 4px;
`;

const CornerMark = styled(Arrow)`
  position: absolute;
  right: 3px;
  bottom: 6px;
`;

const ComboBox = styled.span<{ $w?: number; $edit?: boolean }>`
  display: grid;
  align-items: center;
  height: 38px;
  min-width: 0;
  ${(p) => (p.$w ? css`width: ${p.$w}px; flex: none;` : css`flex: 1;`)}
  > * { grid-area: 1 / 1; }
`;

const ComboSelect = styled.select<{ $pad: number; $edit?: boolean }>`
  ${raised}
  ${(p) => p.$edit && css`background: linear-gradient(to left, #f4f4f4 28px, #d0d0d0 28px, #d0d0d0 29px, #fff 29px);`}
  appearance: none;
  width: 100%;
  height: 100%;
  padding: 0 28px 0 ${(p) => p.$pad}px;
`;

const ComboMark = styled(Arrow)`
  justify-self: end;
  margin-right: 11px;
  pointer-events: none;
`;

const ComboLead = styled.span`
  justify-self: start;
  margin-left: 8px;
  pointer-events: none;
`;

const FillSample = styled.span`
  display: block;
  width: 54px;
  height: 26px;
  background: #666;
`;

const TypeHint = styled.span`
  font-size: 14px;
  font-weight: 600;
  color: #555;
`;

interface ComboProps { value: string; label?: string; id?: string; w?: number; lead?: ReactNode; pad?: number; edit?: boolean }
const Combo = ({ value, label, id, w, lead, pad = 4, edit }: ComboProps) => (
  <ComboBox $w={w}>
    <ComboSelect $pad={pad} $edit={edit} aria-label={label} id={id}>
      <option>{value}</option>
    </ComboSelect>
    {lead && <ComboLead>{lead}</ComboLead>}
    <ComboMark />
  </ComboBox>
);

const TextInput = styled.input<{ $h?: number }>`
  flex: 1;
  height: ${(p) => p.$h ?? 36}px;
  padding: 0 4px;
  border: 2px solid #b4b4b4;
  border-radius: 4px;
  background: #fff;
  &::placeholder { color: #808080; opacity: 1; }
`;

const SpinBox = styled.span<{ $w: number }>`
  display: flex;
  flex: none;
  align-items: center;
  width: ${(p) => p.$w}px;
  height: 35px;
  border: 2px solid #b4b4b4;
  border-radius: 4px;
  background: #fff;
  overflow: hidden;
`;

const SpinInput = styled.input<{ $tight?: boolean }>`
  flex: 1;
  width: 0;
  height: 100%;
  padding: 0 0 0 ${(p) => (p.$tight ? 1 : 5)}px;
  border: 0;
  background: none;
`;

const SpinButtons = styled.span`
  display: grid;
  grid-template-rows: 1fr 1fr;
  width: 21px;
  height: 100%;
  border-left: 2px solid #c0c0c0;
`;

const SpinStep = styled.button`
  display: flex;
  align-items: center;
  justify-content: center;
  border: 0;
  background: #f8f8f8;
`;

const ClearWrap = styled.span`
  margin: 0 14px 0 4px;
`;

const Spin = ({ value, w, id, label, clear, maxed }: { value: string; w: number; id?: string; label?: string; clear?: boolean; maxed?: boolean }) => (
  <SpinBox $w={w}>
    <SpinInput $tight={clear && w < 150} defaultValue={value} id={id} aria-label={label} />
    {clear && <ClearWrap><Icon n="clearX" s={19} /></ClearWrap>}
    <SpinButtons>
      <SpinStep aria-label="增加"><Arrow $up $pale={maxed} $s={5} /></SpinStep>
      <SpinStep aria-label="减少"><Arrow $s={5} /></SpinStep>
    </SpinButtons>
  </SpinBox>
);

const Tick = styled.input.attrs({ type: "checkbox" })`
  appearance: none;
  display: grid;
  place-items: center;
  flex: none;
  width: 20px;
  height: 20px;
  background: #fff;
  border: 2px solid #c4c4c4;
  &:checked::before {
    content: "";
    width: 13px;
    height: 15px;
    background: #000;
    clip-path: polygon(0 50%, 18% 44%, 38% 68%, 78% 0, 100% 4%, 46% 100%, 30% 100%);
  }
`;

const CheckLabel = styled.label<{ $gap?: number; $end?: number }>`
  display: flex;
  align-items: center;
  gap: ${(p) => p.$gap ?? 8}px;
  margin-right: ${(p) => p.$end ?? 0}px;
  white-space: nowrap;
`;

const Slider = styled.input.attrs({ type: "range" })<{ $blue?: boolean }>`
  appearance: none;
  flex: 1;
  height: 20px;
  background: none;
  &::-webkit-slider-runnable-track {
    height: 8px;
    border: 2px solid ${(p) => (p.$blue ? "#1467b8" : "#b0b0b0")};
    border-radius: 4px;
    background: ${(p) => (p.$blue ? "#1e90f0" : "#f2f2f2")};
  }
  &::-webkit-slider-thumb {
    appearance: none;
    width: 19px;
    height: 19px;
    margin: -8px -2px 0 0;
    border: 2px solid #b0b0b0;
    border-radius: 4px;
    background: #fdfdfd;
  }
`;

const SwatchButton = styled.button<{ $h: number }>`
  ${raised}
  flex: 1;
  display: flex;
  height: ${(p) => p.$h}px;
  padding: ${(p) => (p.$h > 45 ? "2px 5px 2px 6px" : "3px 5px 3px 5px")};
`;

const Swatch = styled.span<{ $fill: string; $r?: number }>`
  flex: 1;
  align-self: stretch;
  border-radius: ${(p) => p.$r ?? 0}px;
  background: ${(p) => p.$fill};
`;

const Split = styled.div`
  display: flex;
  flex: 1;
  gap: 1px;
`;

const SplitColor = ({ label, fill, h, r }: { label: string; fill: string; h: number; r?: number }) => (
  <Split>
    <SwatchButton $h={h} aria-label={label}><Swatch $fill={fill} $r={r} /></SwatchButton>
    <Push $w={18} $h={h} aria-label={label + "菜单"}><Arrow $s={5} /></Push>
  </Split>
);

/* ------------------------------------------------------------------ */
/* Main window                                                         */
/* ------------------------------------------------------------------ */

const Desktop = styled.div`
  position: relative;
  display: flex;
  flex-direction: column;
  height: 100vh;
  overflow: hidden;
  background: #f0f0f0;
`;

const TitleBar = styled.header`
  display: flex;
  align-items: center;
  height: 34px;
  padding: 0 18px 0 2px;
  gap: 6px;
  background: #f3f3f3;
  color: #929292;
  font-size: 18px;
`;

const WinButtons = styled.div`
  display: flex;
  gap: 34px;
  margin-left: auto;
`;

const WinButton = styled.button`
  display: grid;
  place-items: center;
  width: 36px;
  height: 28px;
  border: 0;
  background: none;
`;

const Glyph = ({ d, c = "#929292", s = 16 }: { d: string; c?: string; s?: number }) => (
  <Svg width={s} height={s} viewBox="0 0 16 16" fill="none" stroke={c} strokeWidth="1.500"><path d={d} /></Svg>
);

const MenuBar = styled.nav`
  display: flex;
  align-items: center;
  height: 35px;
  padding-left: 6px;
  background: #efefef;
  border-bottom: 2px solid #d4d4d4;
  color: #929292;
`;

const MenuItem = styled.a`
  padding: 0 11px;
  color: inherit;
  text-decoration: none;
  white-space: nowrap;
`;

const ToolRow = styled.div`
  display: flex;
  align-items: center;
  flex: none;
  height: 58px;
  padding-right: 6px;
  background: linear-gradient(#fafafa, #efefef);
  border-bottom: 2px solid #b8b8b8;
`;

const Grip = styled.span<{ $w?: number }>`
  flex: none;
  display: flex;
  justify-content: flex-end;
  width: ${(p) => p.$w ?? 24}px;
  padding-right: 4px;
  &::before {
    content: "";
    width: 8px;
    height: 26px;
    background: radial-gradient(circle, #bdbdbd 1px, transparent 1.5px) 0 0 / 4px 5px;
  }
`;

const ToolGroup = styled.div<{ $w: number }>`
  display: flex;
  flex: none;
  width: ${(p) => p.$w}px;
`;

const Tool = styled.button<{ $on?: boolean }>`
  display: flex;
  align-items: center;
  justify-content: center;
  flex: 1;
  height: 44px;
  border: 0;
  background: none;
  ${(p) => p.$on && css`flex: none; width: 47px; border: 2px solid #b0b0b0; border-radius: 4px; background: #dcdcdc;`}
`;

const DropTool = styled.button<{ $w?: number; $on?: boolean }>`
  display: flex;
  align-items: center;
  justify-content: center;
  flex: none;
  width: ${(p) => p.$w ?? 18}px;
  height: 44px;
  border: 0;
  background: none;
  ${(p) => p.$on && css`border: 2px solid #b0b0b0; border-radius: 4px; background: #dcdcdc;`}
`;

const Divider = styled.span`
  flex: none;
  width: 12px;
  height: 30px;
  background: linear-gradient(to right, transparent 5px, #c8c8c8 5px, #c8c8c8 7px, transparent 7px);
`;

const Spacer = styled.span<{ $w?: number }>`
  flex: ${(p) => (p.$w ? "none" : "1")};
  width: ${(p) => p.$w ?? 0}px;
`;

const Tools = ({ w, list, dim }: { w: number; list: string; dim?: boolean }) => (
  <ToolGroup $w={w}>
    {list.split(" ").map((n) => {
      const off = dim || n.startsWith("-");
      const key = n.replace("-", "");
      return <Tool key={n} aria-label={key} disabled={off}><Icon n={key} dim={off} /></Tool>;
    })}
  </ToolGroup>
);

const More = ({ w = 30 }: { w?: number }) => (
  <DropTool $w={w} aria-label="更多">
    <Svg width="13" height="10" viewBox="0 0 13 10" fill="none" stroke="#333" strokeWidth="2"><path d="M1 1L5 5L1 9M7 1L11 5L7 9" /></Svg>
  </DropTool>
);

const Workspace = styled.main`
  display: flex;
  flex: 1;
  min-height: 0;
`;

const LeftDock = styled.aside`
  display: flex;
  flex-direction: column;
  width: 570px;
  flex: none;
`;

const DockHead = styled.div<{ $h: number }>`
  flex: none;
  height: ${(p) => p.$h}px;
  padding: 4px 6px;
`;

const DockBox = styled.div<{ $h?: number }>`
  ${(p) => (p.$h ? css`flex: none; height: ${p.$h}px;` : css`flex: 1;`)}
  border: 2px solid #c4c4c4;
  background: #fff;
`;

const MapCanvas = styled.section`
  flex: 1;
  margin-left: 9px;
  min-width: 0;
  background: #fff;
  border: 2px solid #b8b8b8;
  border-right: 0;
`;

const MapSvg = styled.svg`
  display: block;
  width: 100%;
  height: 100%;
`;

const RightDock = styled.aside`
  display: flex;
  flex-direction: column;
  flex: none;
  width: 465px;
`;

const DockTitle = styled.div`
  display: flex;
  justify-content: flex-end;
  align-items: center;
  gap: 4px;
  height: 30px;
  padding: 0 2px;
`;

const MiniButton = styled.button`
  display: grid;
  place-items: center;
  width: 17px;
  height: 17px;
  border: 2px solid #606060;
  border-radius: 3px;
  background: #eee;
`;

const DockTools = styled.div`
  display: flex;
  align-items: center;
  gap: 12px;
  height: 46px;
  padding-left: 91px;
`;

const DockTool = styled.button`
  border: 0;
  background: none;
`;

const ThinRule = styled.span`
  width: 2px;
  height: 16px;
  background: #fff;
`;

const DockSearch = styled(TextInput)`
  flex: none;
  font-style: italic;
  padding-left: 44px;
`;

const TreeWrap = styled.div`
  display: flex;
  flex: 1;
  min-height: 0;
  background: #fff;
  border: 2px solid #c4c4c4;
  border-width: 2px 1px 0;
`;

const TreeList = styled.ul`
  flex: 1;
  margin: 0;
  padding: 0;
  list-style: none;
  overflow: hidden;
`;

const TreeItem = styled.li<{ $child?: boolean; $sel?: boolean }>`
  display: flex;
  align-items: center;
  gap: 9px;
  height: 30px;
  padding-left: ${(p) => (p.$child ? 67 : 37)}px;
  white-space: nowrap;
  background: ${(p) => (p.$sel ? "#efefef" : "transparent")};
`;

const ScrollTrack = styled.div`
  display: flex;
  flex-direction: column;
  flex: none;
  width: 21px;
  background: linear-gradient(to right, #fff, #efefef);
  border-left: 2px solid #c8c8c8;
`;

const ScrollCap = styled.button`
  display: grid;
  place-items: center;
  flex: none;
  height: 20px;
  border: 0;
  background: #fafafa;
  border-bottom: 2px solid #c8c8c8;
`;

const ScrollGroove = styled.span<{ $h: number }>`
  flex: none;
  height: ${(p) => p.$h}px;
  margin-top: auto;
  background: #e4e4e4;
  border: 1px solid #c0c0c0;
  border-width: 2px 0;
`;

const Scroll = ({ groove }: { groove: number }) => (
  <ScrollTrack>
    <ScrollCap aria-label="向上"><Arrow $up $s={6} /></ScrollCap>
    <ScrollGroove $h={groove} />
    <ScrollCap aria-label="向下"><Arrow $s={6} /></ScrollCap>
  </ScrollTrack>
);

const Tip = styled.p`
  flex: none;
  margin: 0;
  height: 59px;
  padding: 0;
  line-height: 28px;
  white-space: nowrap;
  overflow: hidden;
  color: #fff;
  background: #55aaff;
  border: 2px solid #2f7cc4;
  a { color: #0000ff; }
`;

const TipClose = styled.a`
  margin-left: 43px;
`;

const StatusBar = styled.footer`
  display: flex;
  align-items: center;
  flex: none;
  height: 47px;
  padding: 3px 10px 0 6px;
  gap: 10px;
`;

const Locator = styled.label`
  display: flex;
  align-items: center;
  width: 299px;
  height: 36px;
  gap: 14px;
  padding: 0 12px;
  border: 2px solid #b4b4b4;
  border-radius: 4px;
  background: #fff;
  input { flex: 1; border: 0; padding: 0; }
  input::placeholder { color: #808080; opacity: 1; }
`;

const StatusTools = styled.div`
  display: flex;
  align-items: center;
  gap: 10px;
  font-size: 18px;
  input, select, button { font-size: 18px; }
`;

const Tight = styled.label<{ $gap?: number }>`
  display: flex;
  align-items: center;
  gap: ${(p) => p.$gap ?? 5}px;
  white-space: nowrap;
`;

const CoordInput = styled(TextInput)<{ $w: number }>`
  flex: none;
  width: ${(p) => p.$w}px;
  padding-left: 8px;
`;

const Watermark = styled.span`
  position: absolute;
  right: 17px;
  bottom: 5px;
  font-size: 15px;
  color: #9a9a9a;
`;

/* ------------------------------------------------------------------ */
/* Dialog frame                                                        */
/* ------------------------------------------------------------------ */

const Dialog = styled.section<{ $x: number; $y: number; $w: number; $h?: number; $strong?: boolean }>`
  position: absolute;
  left: ${(p) => p.$x}px;
  top: ${(p) => p.$y}px;
  width: ${(p) => p.$w}px;
  ${(p) => p.$h && css`height: ${p.$h}px;`}
  display: flex;
  flex-direction: column;
  border: 2px solid #b0b0b0;
  border-radius: 14px;
  background: #f0f0f0;
  overflow: hidden;
  box-shadow: ${(p) => (p.$strong ? "0 30px 70px rgba(0,0,0,.42), 0 0 12px rgba(0,0,0,.15)" : "0 26px 56px rgba(0,0,0,.3), 0 0 10px rgba(0,0,0,.14)")};
`;

const DialogTitle = styled.header<{ $active?: boolean }>`
  display: flex;
  align-items: center;
  flex: none;
  height: 43px;
  gap: 6px;
  padding: 0 6px 4px 9px;
  font-size: 18px;
  color: ${(p) => (p.$active ? "#1a1a1a" : "#929292")};
  background: ${(p) => (p.$active ? "#f9f0eb" : "#f3f3f3")};
`;

const CloseX = styled(WinButton)`
  margin-left: auto;
`;

const Title = ({ text, active }: { text: string; active?: boolean }) => (
  <DialogTitle $active={active}>
    <Icon n="qgis" s={24} />
    <span>{text}</span>
    <CloseX aria-label="关闭"><Glyph d="M1 1L15 15M15 1L1 15" c={active ? "#1a1a1a" : "#929292"} /></CloseX>
  </DialogTitle>
);

/* ------------------------------------------------------------------ */
/* Layer properties                                                    */
/* ------------------------------------------------------------------ */

const PropBody = styled.div`
  display: flex;
  flex: 1;
  min-height: 0;
`;

const Side = styled.div`
  display: flex;
  flex-direction: column;
  width: 223px;
  flex: none;
  background: #5c5c5c;
`;

const SideSearch = styled.label`
  display: flex;
  align-items: center;
  flex: none;
  height: 37px;
  margin-bottom: 9px;
  padding-left: 10px;
  background: #fff;
  border: 2px solid #a0a0a0;
  input { flex: 1; border: 0; }
`;

const SideMain = styled.div`
  display: flex;
  flex: 1;
  min-height: 0;
`;

const SideList = styled.ul`
  flex: 1;
  margin: 0;
  padding: 0;
  list-style: none;
  overflow: hidden;
`;

const SideItem = styled.li<{ $active?: boolean }>`
  display: flex;
  align-items: center;
  gap: 13px;
  height: 60px;
  padding-left: ${(p) => (p.$active ? 11 : 7)}px;
  color: ${(p) => (p.$active ? "#000" : "#fff")};
  background: ${(p) => (p.$active ? "#efefef" : "transparent")};
`;

const PropMain = styled.div`
  display: flex;
  flex-direction: column;
  flex: 1;
  min-width: 0;
  padding: 4px 4px 4px 7px;
`;

const Line = styled.div<{ $gap?: number; $mb?: number }>`
  display: flex;
  align-items: center;
  flex: none;
  gap: ${(p) => p.$gap ?? 9}px;
  margin-bottom: ${(p) => p.$mb ?? 10}px;
`;

const FieldLabel = styled.label<{ $w?: number }>`
  flex: none;
  width: ${(p) => (p.$w ? p.$w + "px" : "auto")};
  white-space: nowrap;
`;

const Narrow = styled.div<{ $gap?: number }>`
  display: flex;
  align-items: center;
  flex: 1;
  min-width: 0;
  gap: ${(p) => p.$gap ?? 10}px;
`;

const Tabs = styled.div`
  display: flex;
  align-items: flex-end;
  flex: none;
  height: 41px;
  border-bottom: 2px solid #b8b8b8;
  margin-bottom: 17px;
`;

const Tab = styled.button<{ $on?: boolean }>`
  height: ${(p) => (p.$on ? 41 : 37)}px;
  padding: 0 16px;
  border: 2px solid #c0c0c0;
  border-bottom: 0;
  border-radius: 4px 4px 0 0;
  background: ${(p) => (p.$on ? "#fdfdfd" : "#e6e6e6")};
  margin-bottom: ${(p) => (p.$on ? -2 : 0)}px;
`;

const TableBox = styled.div`
  flex: 1;
  min-height: 0;
  margin-bottom: 11px;
  background: #fff;
  border-left: 2px solid #c0c0c0;
  overflow: hidden;
`;

const Classes = styled.table`
  width: 100%;
  border-collapse: collapse;
  table-layout: fixed;
  th {
    height: 33px;
    padding: 0 3px;
    font-weight: 400;
    text-align: left;
    background: linear-gradient(#fcfcfc, #ededed);
    border-bottom: 2px solid #b8b8b8;
  }
  th + th { border-left: 2px solid #c4c4c4; }
  td { height: 27px; padding: 0 5px; white-space: nowrap; }
`;

const HeadSort = styled.span`
  display: flex;
  align-items: center;
  justify-content: space-between;
  padding-right: 4px;
`;

const Mark = styled.span`
  display: flex;
  align-items: center;
  gap: 10px;
`;

const ColorChip = styled.span<{ $c: string; $s?: number }>`
  flex: none;
  width: ${(p) => p.$s ?? 24}px;
  height: 24px;
  background: ${(p) => p.$c};
`;

const SectionHead = styled.h2`
  display: flex;
  align-items: center;
  gap: 12px;
  flex: none;
  margin: 0 0 4px;
  padding-left: 4px;
  font-size: 20px;
  line-height: 24px;
  font-weight: 700;
`;

const GroupBox = styled.div`
  display: flex;
  flex-direction: column;
  flex: none;
  height: 226px;
  margin: 0 0 10px 2px;
  padding: 16px 7px 0 1px;
  border: 2px solid #d8d8d8;
  background: #ececec;
`;

const BlendGrid = styled.div`
  display: grid;
  grid-template-columns: 87px 1fr 1fr;
  column-gap: 1px;
  row-gap: 3px;
  margin: 12px 0 9px;
`;

const BlendLabel = styled.span`
  grid-row: 1 / span 2;
  align-self: center;
  padding-top: 4px;
`;

const CellCombo = styled.div`
  display: flex;
`;

const SIDE: [string, string][] = [
  ["info", "信息"], ["source", "源"], ["symbology", "符号化"], ["tagYellow", "标注"], ["mask", "掩膜"], ["cube", "3D视图"],
  ["pie", "图表"], ["fields", "字段"], ["form", "属性表单"], ["join", "连接"], ["storage", "附加存储"], ["action", "动作"],
  ["bubble", "显示"], ["brush", "渲染"], ["clock", "时态"], ["epsilon", "变量"], ["elev", "高程"], ["meta", "元数据"], ["deps", "依赖"],
];

const CLASSES = [
  ["#fff5f0", "0.00 - 0.00", "0 - 0"],
  ["#fcc9b5", "0.00 - 300.00", "0 - 300"],
  ["#fc9070", "300.00 - 600.00", "300 - 600"],
  ["#f6503a", "600.00 - 1000.00", "600 - 1000"],
  ["#c8161b", "1000.00 - 1400.00", "1000 - 1400"],
  ["#67000d", "1400.00 - 1800.00", "1400 - 1800"],
];

const RAMP = "linear-gradient(to right, #fff5f0, #fee0d2 13%, #fcbba1 26%, #fc9272 39%, #fb6a4a 52%, #ef3b2c 65%, #cb181d 78%, #a50f15 90%, #67000d)";

const LayerProperties = () => {
  const id = useId();
  return (
    <Dialog $x={9} $y={181} $w={1363} $h={1221}>
      <Title text="图层属性 - 等高线 — 符号化" />
      <PropBody>
        <Side>
          <SideSearch><Icon n="magnify" s={20} /><input aria-label="搜索" /></SideSearch>
          <SideMain>
            <SideList>
              {SIDE.map(([icon, text]) => (
                <SideItem key={text} $active={text === "符号化"}><Icon n={icon} s={40} />{text}</SideItem>
              ))}
            </SideList>
            <Scroll groove={200} />
          </SideMain>
        </Side>
        <PropMain>
          <Line><Combo value="渐进" label="渲染器" lead={<Icon n="grad" s={22} />} pad={34} /></Line>
          <Line $gap={0}>
            <FieldLabel $w={87} htmlFor={id + "v"}>值</FieldLabel>
            <Narrow>
              <Combo id={id + "v"} value="ELEV_MIN" lead={<TypeHint>1.2</TypeHint>} pad={34} edit />
              <Push $w={36} aria-label="表达式"><Icon n="epsilon" s={20} /></Push>
            </Narrow>
          </Line>
          <Line $gap={0}><FieldLabel $w={87}>符号</FieldLabel><SplitColor label="符号" fill={PINK} h={52} /></Line>
          <Line $gap={0} $mb={12}>
            <FieldLabel $w={87} htmlFor={id + "f"}>图例格式</FieldLabel>
            <Narrow>
              <TextInput id={id + "f"} defaultValue="%1 - %2" />
              <Spin w={108} value="精度(" label="精度" clear />
              <CheckLabel $end={8}><Tick defaultChecked />裁剪</CheckLabel>
            </Narrow>
          </Line>
          <Line $gap={0}><FieldLabel $w={87}>颜色渐变</FieldLabel><SplitColor label="颜色渐变" fill={RAMP} h={36} /></Line>
          <Tabs><Tab $on>类别</Tab><Tab>直方图</Tab></Tabs>
          <TableBox>
            <Classes>
              <colgroup><col width="80" /><col width="175" /><col /></colgroup>
              <thead>
                <tr><th><HeadSort>符号<Arrow /></HeadSort></th><th>值</th><th>图例</th></tr>
              </thead>
              <tbody>
                {CLASSES.map(([c, v, l]) => (
                  <tr key={v}><td><Mark><Tick defaultChecked aria-label={l} /><ColorChip $c={c} /></Mark></td><td>{v}</td><td>{l}</td></tr>
                ))}
              </tbody>
            </Classes>
          </TableBox>
          <Line>
            <FieldLabel htmlFor={id + "m"}>模式</FieldLabel>
            <Combo w={247} id={id + "m"} value="自然间断点（Jenks）" lead={<Icon n="jenks" s={24} />} pad={34} />
            <Spacer />
            <FieldLabel htmlFor={id + "c"}>类别</FieldLabel>
            <Spin w={108} value="6" id={id + "c"} />
          </Line>
          <Line $mb={16}>
            <Push>分类</Push>
            <Push $w={42} $h={36} aria-label="添加"><Icon n="plus" s={24} /></Push>
            <Push $w={42} $h={36} aria-label="移除"><Icon n="minus" s={24} /></Push>
            <Push>全部删除</Push>
            <Spacer />
            <Push>高级<MenuMark $s={4} /></Push>
          </Line>
          <Line $mb={32}><CheckLabel><Tick defaultChecked />关联分类边界</CheckLabel></Line>
          <SectionHead><Arrow $s={8} />图层渲染</SectionHead>
          <GroupBox>
            <Line $mb={0} $gap={6}>
              <FieldLabel htmlFor={id + "o"} $w={82}>不透明度</FieldLabel>
              <Slider id={id + "o"} defaultValue={100} />
              <Spin w={150} value="100.0 %" label="不透明度" maxed />
            </Line>
            <BlendGrid>
              <BlendLabel>混合模式</BlendLabel>
              <label htmlFor={id + "l"}>图层</label>
              <label htmlFor={id + "e"}>要素</label>
              <CellCombo><Combo id={id + "l"} value="正常" /></CellCombo>
              <CellCombo><Combo id={id + "e"} value="正常" /></CellCombo>
            </BlendGrid>
            <Line $mb={9}><CheckLabel><Tick />绘制效果</CheckLabel><Spacer /><Push $w={36} $h={25} disabled aria-label="效果"><Icon n="star" s={18} dim /></Push></Line>
            <Line $mb={0}><CheckLabel><Tick />控制要素渲染顺序</CheckLabel><Spacer /><Push $w={36} $h={34} disabled aria-label="排序"><Icon n="sortAz" s={22} dim /></Push></Line>
          </GroupBox>
          <Line $mb={0}>
            <Push>样式<MenuMark $s={4} /></Push>
            <Spacer />
            <Push>OK</Push><Push>Cancel</Push><Push>Apply</Push><Push>Help</Push>
          </Line>
        </PropMain>
      </PropBody>
    </Dialog>
  );
};

/* ------------------------------------------------------------------ */
/* Symbol settings                                                     */
/* ------------------------------------------------------------------ */

const PadBody = styled.div`
  display: flex;
  flex-direction: column;
  padding: 17px 15px 14px 16px;
`;

const TopArea = styled.div<{ $w: number }>`
  display: grid;
  grid-template-columns: ${(p) => p.$w}px 382px 1fr;
  height: 266px;
`;

const Preview = styled.div`
  display: grid;
  place-items: center;
  padding: 0 10px 0 0;
`;

const PreviewBox = styled.span`
  width: 91px;
  height: 91px;
  background: ${PINK};
  box-shadow: 2px 2px 3px rgba(0, 0, 0, 0.85), 1px 2px 10px rgba(0, 0, 0, 0.35);
`;

const ListBox = styled.ul`
  margin: 0;
  padding: 0;
  list-style: none;
  background: #fff;
  border-right: 2px solid #c0c0c0;
  border-bottom: 2px solid #c0c0c0;
`;

const LayerRow = styled.li<{ $root?: boolean }>`
  display: flex;
  align-items: center;
  gap: 9px;
  height: 30px;
  padding-left: ${(p) => (p.$root ? 8 : 65)}px;
  font-weight: ${(p) => (p.$root ? 700 : 400)};
  background: ${(p) => (p.$root ? "#fff" : "#efefef")};
`;

const RootMark = styled.span`
  display: flex;
  width: 18px;
`;

const ButtonGrid = styled.div<{ $top: number; $gapY: number; $w: number }>`
  display: grid;
  grid-template-columns: repeat(2, ${(p) => p.$w}px);
  align-content: start;
  justify-content: end;
  gap: ${(p) => p.$gapY}px 9px;
  padding-top: ${(p) => p.$top}px;
`;

const WhiteRule = styled.hr`
  width: 100%;
  height: 3px;
  margin: 10px 0 12px;
  border: 0;
  background: #fff;
`;

const ScrollPane = styled.div`
  display: flex;
  gap: 15px;
  margin-bottom: 17px;
`;

const PaneMain = styled.div`
  display: flex;
  flex-direction: column;
  flex: 1;
  min-width: 0;
`;

const Form = styled.div`
  display: grid;
  grid-template-columns: 217px 348px 1fr;
  grid-template-rows: repeat(6, 54px) 97px;
  align-items: center;
  margin: 13px 0 0 14px;
`;

const FormField = styled.div`
  display: flex;
  align-items: center;
  gap: 10px;
`;

const OverrideButton = styled.button<{ $gap?: number }>`
  justify-self: start;
  margin-left: ${(p) => p.$gap ?? 15}px;
  border: 0;
  background: none;
`;

const Stack = styled.div`
  display: flex;
  flex-direction: column;
  gap: 13px;
`;

const OffsetLabel = styled.div`
  display: flex;
  align-items: center;
  justify-content: space-between;
  padding-right: 9px;
`;

const AxisLabels = styled.div`
  display: flex;
  flex-direction: column;
  gap: 24px;
`;

const EffectLine = styled.div`
  display: flex;
  align-items: center;
  height: 69px;
`;

const EffectToggle = styled.div`
  display: flex;
  align-items: center;
  gap: 17px;
  margin-left: 67px;
`;

const ButtonLine = styled.div`
  display: flex;
  justify-content: flex-end;
  gap: 9px;
`;

const Override = ({ gap }: { gap?: number }) => <OverrideButton $gap={gap} aria-label="数据定义覆盖"><Icon n="dd" s={34} /></OverrideButton>;

const SymbolSettings = () => {
  const id = useId();
  return (
    <Dialog $x={1455} $y={1} $w={725}>
      <Title text="符号设置" />
      <PadBody>
        <TopArea $w={217}>
          <Preview><PreviewBox /></Preview>
          <ListBox>
            <LayerRow $root><RootMark><Arrow /></RootMark><ColorChip $c={PINK} />填充</LayerRow>
            <LayerRow><ColorChip $c={PINK} />简单填充</LayerRow>
          </ListBox>
          <ButtonGrid $top={17} $gapY={24} $w={36}>
            <Push $w={36} $h={35} aria-label="添加"><Icon n="plus" s={23} /></Push>
            <Push $w={36} $h={35} disabled aria-label="上移"><Icon n="up" s={23} dim /></Push>
            <Push $w={36} $h={35} disabled aria-label="移除"><Icon n="minus" s={23} dim /></Push>
            <Push $w={36} $h={35} disabled aria-label="下移"><Icon n="down" s={23} dim /></Push>
            <Push $w={36} $h={35} aria-label="复制"><Icon n="dup" s={23} /></Push>
            <Push $w={36} $h={35} aria-label="锁定"><Icon n="lock" s={24} /><CornerMark $s={4} /></Push>
          </ButtonGrid>
        </TopArea>
        <WhiteRule />
        <ScrollPane>
          <PaneMain>
            <Line $gap={0} $mb={0}>
              <FieldLabel $w={118} htmlFor={id + "t"}>符号图层类型</FieldLabel>
              <Combo id={id + "t"} value="简单填充" />
            </Line>
            <Form>
              <label>填充颜色</label><FormField><SplitColor label="填充颜色" fill={PINK} h={41} r={5} /></FormField><Override />
              <label htmlFor={id + "a"}>填充样式</label><FormField><Combo id={id + "a"} value="均匀填充" lead={<FillSample />} pad={63} /></FormField><Override />
              <label>描边颜色</label><FormField><SplitColor label="描边颜色" fill="#232323" h={41} r={5} /></FormField><Override />
              <label htmlFor={id + "b"}>描边宽度</label>
              <FormField><Spin w={215} id={id + "b"} value="0.260000" clear /><Combo label="单位" value="毫米" /></FormField><Override />
              <label htmlFor={id + "c"}>描边样式</label><FormField><Combo id={id + "c"} value="无描边" pad={63} /></FormField><Override />
              <label htmlFor={id + "d"}>连接样式</label><FormField><Combo id={id + "d"} value="斜角" lead={<Icon n="bevel" s={22} />} pad={33} /></FormField><Override />
              <OffsetLabel><span>偏移量</span><AxisLabels><label htmlFor={id + "x"}>横坐标</label><label htmlFor={id + "y"}>纵坐标</label></AxisLabels></OffsetLabel>
              <FormField>
                <Stack><Spin w={215} id={id + "x"} value="0.000000" /><Spin w={215} id={id + "y"} value="0.000000" /></Stack>
                <Combo label="单位" value="毫米" />
              </FormField><Override />
            </Form>
            <EffectLine>
              <CheckLabel><Tick defaultChecked />启用符号图层</CheckLabel>
              <Override gap={20} />
              <EffectToggle>
                <CheckLabel><Tick defaultChecked />绘制效果</CheckLabel>
                <Push $w={36} $h={35} aria-label="自定义效果"><Icon n="star" s={24} /></Push>
              </EffectToggle>
            </EffectLine>
          </PaneMain>
          <Scroll groove={10} />
        </ScrollPane>
        <ButtonLine><Push>OK</Push><Push>Cancel</Push><Push>Help</Push></ButtonLine>
      </PadBody>
    </Dialog>
  );
};

/* ------------------------------------------------------------------ */
/* Effect properties                                                   */
/* ------------------------------------------------------------------ */

const EffectRow = styled.li<{ $sel?: boolean }>`
  height: 27px;
  padding: 4px 5px;
  background: ${(p) => (p.$sel ? "#efefef" : "#fff")};
  line-height: 21px;
`;

const Indent = styled.div`
  display: flex;
  flex-direction: column;
  gap: 10px;
  margin: 0 15px 27px 14px;
`;

const EffectProperties = () => {
  const id = useId();
  const rows: [string, boolean][] = [["内发光", false], ["内部阴影", false], ["源", true], ["外发光", false], ["阴影", true]];
  return (
    <Dialog $x={1459} $y={956} $w={680} $strong>
      <Title text="效果属性" active />
      <PadBody>
        <TopArea $w={160}>
          <Preview><PreviewBox /></Preview>
          <ListBox>
            {rows.map(([t, on]) => (
              <EffectRow key={t} $sel={t === "源"}><CheckLabel $gap={10}><Tick defaultChecked={on} />{t}</CheckLabel></EffectRow>
            ))}
          </ListBox>
          <ButtonGrid $top={22} $gapY={30} $w={41}>
            <Push $w={41} $h={35} aria-label="添加"><Icon n="plus" s={24} /></Push>
            <Push $w={41} $h={35} aria-label="上移"><Icon n="up" s={24} /></Push>
            <Push $w={41} $h={35} aria-label="移除"><Icon n="minus" s={24} /></Push>
            <Push $w={41} $h={35} aria-label="下移"><Icon n="down" s={24} /></Push>
          </ButtonGrid>
        </TopArea>
        <WhiteRule />
        <Line $gap={0} $mb={21}><FieldLabel $w={99} htmlFor={id + "t"}>效果类型：</FieldLabel><Combo id={id + "t"} value="源" /></Line>
        <Indent>
          <Line $mb={0} $gap={0}>
            <FieldLabel $w={88} htmlFor={id + "o"}>不透明度</FieldLabel>
            <Narrow $gap={6}><Slider $blue id={id + "o"} defaultValue={100} /><Spin w={150} value="100.0 %" label="不透明度" maxed /></Narrow>
          </Line>
          <Line $mb={0} $gap={0}><FieldLabel $w={88} htmlFor={id + "m"}>混合模式</FieldLabel><Combo id={id + "m"} value="正常" /></Line>
          <Line $mb={0} $gap={0}><FieldLabel $w={88} htmlFor={id + "d"}>绘制模式</FieldLabel><Combo id={id + "d"} value="渲染并修饰" /></Line>
        </Indent>
        <ButtonLine><Push $tone="#4aa0ec">OK</Push><Push>Cancel</Push><Push>Help</Push></ButtonLine>
      </PadBody>
    </Dialog>
  );
};

/* ------------------------------------------------------------------ */
/* Map drawing                                                         */
/* ------------------------------------------------------------------ */

interface TerrainProps { id: string; rgb: [number, number, number]; t: number; f?: number | string; seed: number; d?: number; sh?: number }
const Terrain = ({ id, rgb, t, f = 0.04, seed, d = 36, sh = 0.75 }: TerrainProps) => (
  <filter id={id} x="-10%" y="-10%" width="120%" height="120%" colorInterpolationFilters="sRGB">
    <feTurbulence type="fractalNoise" baseFrequency={f} numOctaves={6} seed={seed} result="n" />
    <feDisplacementMap in="SourceGraphic" in2="n" scale={d} xChannelSelector="R" yChannelSelector="G" result="d" />
    <feColorMatrix in="n" type="matrix" values={`0 0 0 0 ${rgb[0]} 0 0 0 0 ${rgb[1]} 0 0 0 0 ${rgb[2]} 30 0 0 0 ${-30 * t}`} result="c" />
    <feComposite in="c" in2="d" operator="in" />
    <feDropShadow dx="1.500" dy="2" stdDeviation="1.500" floodOpacity={sh} />
  </filter>
);

const MapDrawing = () => (
  <MapSvg aria-label="地图">
    <defs>
      <filter id="land" x="-30%" y="-100%" width="160%" height="300%" colorInterpolationFilters="sRGB">
        <feTurbulence type="fractalNoise" baseFrequency="0.05" numOctaves={4} seed="3" result="n" />
        <feDisplacementMap in="SourceGraphic" in2="n" scale="10" xChannelSelector="R" yChannelSelector="G" />
        <feDropShadow dx="6" dy="10" stdDeviation="10" floodOpacity="1" />
      </filter>
      <Terrain id="peach" rgb={[0.96, 0.77, 0.7]} t={0.34} f="0.03 0.05" seed={7} d={44} />
      <Terrain id="ridge" rgb={[0.95, 0.75, 0.67]} t={0.5} f="0.03 0.06" seed={21} d={20} />
      <Terrain id="ridge2" rgb={[0.93, 0.71, 0.63]} t={0.53} f="0.03 0.08" seed={31} d={20} />
      <Terrain id="isle" rgb={[0.95, 0.75, 0.66]} t={0.42} f="0.07 0.09" seed={2} d={20} sh={0.5} />
      <Terrain id="coral" rgb={[0.91, 0.5, 0.38]} t={0.42} f="0.05 0.08" seed={11} d={24} />
      <Terrain id="brick" rgb={[0.85, 0.22, 0.15]} t={0.4} f="0.06 0.09" seed={5} d={24} sh={0.5} />
    </defs>
    <g transform="translate(-581 -246)">
      <path filter="url(#land)" fill="#f8ede9" d="M1300 520L1376 505L1392 502L1398 476L1434 472L1446 496L1470 508V1302L1446 1310L1428 1303L1400 1306L1372 1320L1300 1360Z" />
      <path filter="url(#land)" fill="#f0dcd6" d="M1180 1390L1330 1390L1312 1404L1306 1420L1292 1406L1262 1408L1256 1434L1236 1438L1226 1410L1196 1408L1186 1422Z" />
      <path fill="#16181a" d="M1436 511L1448 506L1460 502V518L1444 515Z" />
      <path fill="#b4d4e4" d="M1371 500L1384 499L1376 504H1371Z" />
      <path filter="url(#isle)" fill="#000" d="M1390 562L1414 550L1420 558L1402 574L1390 572ZM1418 580L1434 572L1434 584L1424 588ZM1436 590L1464 580V602L1440 600Z" />
      <path filter="url(#peach)" fill="#000" d="M1330 655L1395 648L1416 658L1426 680L1412 700L1430 712L1470 705V1185L1440 1180L1400 1170L1330 1165Z" />
      <path filter="url(#ridge)" fill="#000" d="M1350 740H1470V1175H1350Z" />
      <path filter="url(#ridge2)" fill="#000" d="M1350 960H1470V1178H1350Z" />
      <path filter="url(#coral)" fill="#000" d="M1408 855L1440 842L1445 868L1418 876ZM1428 925L1448 920L1452 940L1430 942ZM1365 1005L1390 1000L1396 1030L1365 1035ZM1416 1000L1470 965V1052L1445 1045ZM1365 1070L1385 1075L1385 1105L1365 1110ZM1365 1110L1420 1104L1470 1112V1165L1440 1155L1420 1170L1365 1165Z" />
      <path filter="url(#brick)" fill="#000" d="M1438 1005L1470 995V1045L1450 1040ZM1360 1118L1408 1112L1424 1140L1412 1160L1360 1164ZM1448 1120L1470 1118V1158Z" />
      <path filter="url(#isle)" fill="#000" d="M1368 1182L1390 1186L1386 1200L1370 1200ZM1368 1215L1390 1218L1392 1246L1368 1246ZM1380 1266L1404 1262L1408 1278L1386 1280ZM1404 1280L1424 1280L1420 1292L1404 1292ZM1428 1260L1448 1262L1446 1268ZM1440 1310L1468 1312V1326Z" />
      <path fill="#16181a" d="M1444 1304L1462 1294V1312L1450 1310Z" />
      <path filter="url(#isle)" fill="#000" d="M1218 1396L1258 1396L1260 1432L1236 1436ZM1180 1412L1200 1402L1204 1420ZM1294 1400L1316 1398L1308 1424Z" />
    </g>
  </MapSvg>
);

/* ------------------------------------------------------------------ */
/* Annotations                                                         */
/* ------------------------------------------------------------------ */

const Marker = styled.div<{ $x: number; $y: number; $w: number; $h: number }>`
  position: absolute;
  left: ${(p) => p.$x}px;
  top: ${(p) => p.$y}px;
  width: ${(p) => p.$w}px;
  height: ${(p) => p.$h}px;
  border: 3px solid ${RED};
  pointer-events: none;
`;

const StepNo = styled.span<{ $x: number; $y: number }>`
  position: absolute;
  left: ${(p) => p.$x}px;
  top: ${(p) => p.$y}px;
  font-size: 38px;
  line-height: 40px;
  font-weight: 700;
  color: ${RED};
`;

const Strokes = styled.svg`
  position: absolute;
  inset: 0;
  width: 100%;
  height: 100%;
  pointer-events: none;
`;

/* ------------------------------------------------------------------ */
/* Toolbox contents                                                    */
/* ------------------------------------------------------------------ */

const RECENT: [string, string][] = [
  ["contour", "等高线多边形"], ["maskClip", "按掩膜图层裁剪栅格"], ["multi", "多部件转单部件"], ["merge", "合并"], ["clip", "裁剪"],
];
const GROUPS = "3D瓦片,Database,GPS,制图,图层工具,图表,插值,文件工具,栅格分析,栅格创建,栅格地形分析,栅格工具,点云提取,点云数据管理,点云转换,矢量几何图形,矢量分析,矢量创建,矢量叠加分析,矢量属性表,矢量瓦片,矢量选择集,矢量通用,网孔,网络分析".split(",");
const PROVIDERS: [string, string][] = [
  ["gear", "FSC Tools"], ["gdal", "GDAL"], ["geodet", "Geographical detector"], ["latlon", "Lat Lon tools"], ["ors", "ORS Tools"], ["osm", "QuickOSM"], ["saga", "SAGA Next Gen"],
];
const MENUS: [string, string][] = [
  ["工程", "J"], ["编辑", "E"], ["视图", "V"], ["图层", "L"], ["设置", "S"], ["插件", "P"], ["矢量", "O"], ["栅格", "R"], ["数据库", "D"], ["Web", "W"], ["网孔", "M"], ["HCMGIS", ""], ["数据处理", "C"], ["帮助", "H"],
];

export default function App() {
  return (
    <Desktop>
      <Global />
      <TitleBar>
        <Icon n="qgis" s={24} />
        <span>*3D — QGIS</span>
        <WinButtons>
          <WinButton aria-label="最小化"><Glyph d="M0 8H16" /></WinButton>
          <WinButton aria-label="还原"><Glyph d="M1 4H12V15H1ZM4 4V1H15V12H12" /></WinButton>
          <WinButton aria-label="关闭窗口"><Glyph d="M1 1L15 15M15 1L1 15" /></WinButton>
        </WinButtons>
      </TitleBar>
      <MenuBar>
        {MENUS.map(([t, k]) => <MenuItem key={t} href="#">{t}{k && <>(<u>{k}</u>)</>}</MenuItem>)}
      </MenuBar>
      <ToolRow>
        <Grip $w={19} />
        <Tools w={296} list="newDoc open save newLayout layoutMgr style" />
        <Grip $w={25} />
        <Tools w={792} list="hand pan zoomIn zoomOut zoomFull zoomSel zoomLayer -zoomNative zoomLast -zoomNext mapView view3d bookmarkNew bookmarks clock refresh" />
        <Grip $w={25} />
        <Tool $on aria-label="选择要素"><Icon n="select" /></Tool>
        <DropTool $on aria-label="选择方式"><Arrow /></DropTool>
        <Tools w={50} list="selectForm" /><DropTool aria-label="选择表单菜单"><Arrow /></DropTool>
        <Tools w={50} list="deselect" /><DropTool aria-label="取消选择菜单"><Arrow /></DropTool>
        <Tools w={50} list="selectLoc" /><DropTool aria-label="位置选择菜单"><Arrow /></DropTool>
        <Grip />
        <Spacer />
        <Tools w={58} list="josm" />
        <Grip $w={22} />
        <Tools w={98} list="latlon pinMap" />
        <Spacer $w={24} />
        <More /><Grip $w={18} />
        <Tools w={48} list="python" />
        <More w={24} /><Grip $w={22} />
        <Tools w={46} list="bus" />
      </ToolRow>
      <ToolRow>
        <Grip $w={19} />
        <Tools w={347} list="addLayer dataSrc newShp feather chip meshNew gpkg" />
        <Grip />
        <Tools w={197} list="-pencils pencil -saveEdit -digitize" />
        <DropTool aria-label="数字化菜单"><Arrow $pale /></DropTool>
        <Tools w={99} list="blobNew vertex" dim />
        <DropTool aria-label="顶点菜单"><Arrow $pale /></DropTool>
        <Tools w={346} list="tableEdit trash scissors copy paste undo redo" dim />
        <Grip />
        <Tools w={98} list="tagYellow pie" />
        <Divider />
        <Tools w={98} list="tagBlue tagRed" />
        <Divider />
        <Tools w={148} list="tagPin tagEye tagMove" dim />
        <Spacer />
        <Tools w={148} list="blobNew blobRing blobDel" dim />
        <Spacer $w={30} />
        <More /><Grip $w={17} />
        <Tools w={48} list="ring" />
        <DropTool aria-label="形状菜单"><Arrow /></DropTool>
        <More w={26} /><Grip $w={22} /><Grip $w={24} />
        <Tools w={46} list="crest" />
      </ToolRow>
      <ToolRow />
      <Workspace>
        <LeftDock>
          <DockHead $h={76}>浏览</DockHead>
          <DockBox $h={684} />
          <DockHead $h={86}>图层</DockHead>
          <DockBox />
        </LeftDock>
        <MapCanvas><MapDrawing /></MapCanvas>
        <RightDock>
          <DockTitle>
            <MiniButton aria-label="浮动"><Glyph s={9} c="#444" d="M1 6H10V15H1ZM6 6V1H15V10H10" /></MiniButton>
            <MiniButton aria-label="关闭面板"><Glyph s={9} c="#222" d="M1 1L15 15M15 1L1 15" /></MiniButton>
          </DockTitle>
          <DockTools>
            <DockTool aria-label="历史"><Icon n="sClock" s={23} /></DockTool>
            <DockTool aria-label="结果"><Icon n="sDoc" s={23} /></DockTool>
            <ThinRule />
            <DockTool aria-label="就地编辑"><Icon n="note" s={23} /></DockTool>
            <ThinRule />
            <DockTool aria-label="选项"><Icon n="wrench" s={23} /></DockTool>
          </DockTools>
          <DockSearch placeholder="搜索…" aria-label="搜索算法" />
          <TreeWrap>
            <TreeList>
              <TreeItem><Icon n="sClock" s={24} />最近用过</TreeItem>
              {RECENT.map(([i, t], k) => <TreeItem key={t} $child $sel={k === 0}><Icon n={i} s={24} />{t}</TreeItem>)}
              {GROUPS.map((t) => <TreeItem key={t}><Icon n="qgis" s={24} />{t}</TreeItem>)}
              {PROVIDERS.map(([i, t]) => <TreeItem key={t}><Icon n={i} s={24} />{t}</TreeItem>)}
            </TreeList>
            <Scroll groove={110} />
          </TreeWrap>
          <Tip>您可以添加更多算法到工具箱中，<a href="#">启用附加提供程<br />序</a><TipClose href="#">[关闭]</TipClose></Tip>
        </RightDock>
      </Workspace>
      <StatusBar>
        <Locator><Icon n="magnify" s={18} /><input placeholder="搜索 (Ctrl+K)" aria-label="搜索" /></Locator>
        <Spacer />
        <StatusTools>
          <Tight>坐标<CoordInput $w={172} defaultValue="18.719 , 108.444" /></Tight>
          <StatusIcon><Icon n="mouse" s={20} /></StatusIcon>
          <Tight>比例<Combo w={137} value="1:955170" edit label="比例" /></Tight>
          <StatusIcon><Icon n="padlock" s={20} /></StatusIcon>
          <Tight>放大镜<Spin w={133} value="100%" /></Tight>
          <Tight $gap={12}>旋转角度<Spin w={136} value="0.0°" /></Tight>
          <CheckLabel><Tick defaultChecked />渲染</CheckLabel>
          <CrsButton><Icon n="globe" s={22} />EPSG:4326</CrsButton>
          <Icon n="chat" s={24} />
        </StatusTools>
      </StatusBar>

      <LayerProperties />
      <SymbolSettings />
      <EffectProperties />

      <Marker $x={218} $y={321} $w={1163} $h={71} />
      <Marker $x={1728} $y={837} $w={213} $h={54} />
      <Marker $x={1629} $y={1121} $w={380} $h={50} />
      <StepNo $x={236} $y={337}>1.</StepNo>
      <StepNo $x={1975} $y={839}>2.</StepNo>
      <StepNo $x={1680} $y={1174}>3.</StepNo>
      <Strokes aria-hidden="true">
        <g stroke={RED} strokeWidth="5" strokeLinecap="round">
          <path d="M1385 353L1832 824" />
          <path d="M1735 922L1658 1094" />
        </g>
        <path d="M1844 837L1822 829L1831 822L1838 814Z M1649 1112L1648 1088L1657 1093L1667 1096Z" fill={RED} />
      </Strokes>
      <Watermark>CSDN @GIS辣妹</Watermark>
    </Desktop>
  );
}

const StatusIcon = styled.span`
  padding: 0 5px;
`;

const CrsButton = styled.button`
  display: flex;
  align-items: center;
  gap: 6px;
  margin: 0 30px 0 12px;
  border: 0;
  background: none;
  white-space: nowrap;
`;
